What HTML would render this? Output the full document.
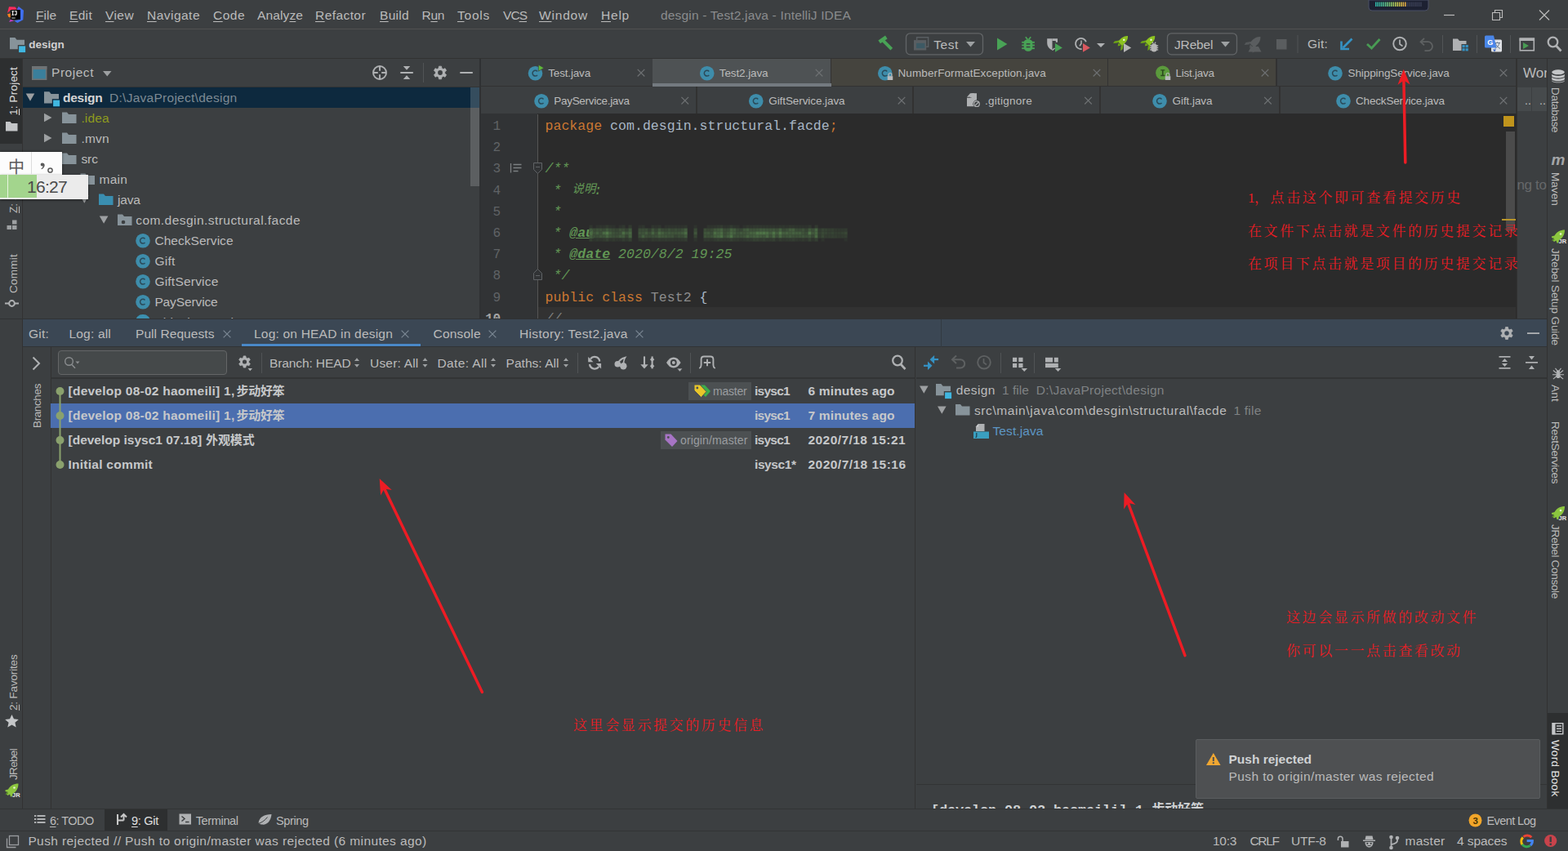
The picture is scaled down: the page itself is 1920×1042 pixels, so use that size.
<!DOCTYPE html>
<html><head><meta charset="utf-8"><title>desgin - Test2.java - IntelliJ IDEA</title>
<style>
html,body{margin:0;padding:0;background:#3c3f41;}
body{width:1920px;height:1042px;overflow:hidden;position:relative;font-family:"Liberation Sans",sans-serif;}
.t{position:absolute;white-space:pre;line-height:20px;height:20px;font-family:"Liberation Sans",sans-serif;}
.r{position:absolute;}
.v{position:absolute;white-space:pre;line-height:20px;height:20px;transform-origin:0 0;font-family:"Liberation Sans",sans-serif;}
svg.ov{position:absolute;left:0;top:0;width:1920px;height:1042px;overflow:visible;}
u{text-decoration:underline;text-underline-offset:1.5px;text-decoration-thickness:1px;}
</style></head>
<body>
<div class="r" style="left:0px;top:0px;width:1920px;height:36px;background:#3c3f41;"></div>
<div class="r" style="left:0px;top:35px;width:1920px;height:1px;background:#515151;"></div>
<div class="r" style="left:0px;top:36px;width:1920px;height:35px;background:#3c3f41;"></div>
<div class="r" style="left:0px;top:71px;width:1920px;height:1px;background:#323232;"></div>
<span class="t" style="left:44.00px;top:9px;font-size:15.5px;color:#bbbbbb;letter-spacing:0.006px;"><u>F</u>ile</span>
<span class="t" style="left:85.00px;top:9px;font-size:15.5px;color:#bbbbbb;letter-spacing:0.323px;"><u>E</u>dit</span>
<span class="t" style="left:129.00px;top:9px;font-size:15.5px;color:#bbbbbb;letter-spacing:0.421px;"><u>V</u>iew</span>
<span class="t" style="left:180.00px;top:9px;font-size:15.5px;color:#bbbbbb;letter-spacing:0.478px;"><u>N</u>avigate</span>
<span class="t" style="left:261.00px;top:9px;font-size:15.5px;color:#bbbbbb;letter-spacing:0.486px;"><u>C</u>ode</span>
<span class="t" style="left:315.00px;top:9px;font-size:15.5px;color:#bbbbbb;letter-spacing:0.122px;">Analy<u>z</u>e</span>
<span class="t" style="left:386.00px;top:9px;font-size:15.5px;color:#bbbbbb;letter-spacing:0.428px;"><u>R</u>efactor</span>
<span class="t" style="left:465.00px;top:9px;font-size:15.5px;color:#bbbbbb;letter-spacing:0.307px;"><u>B</u>uild</span>
<span class="t" style="left:516.50px;top:9px;font-size:15.5px;color:#bbbbbb;letter-spacing:-0.312px;">R<u>u</u>n</span>
<span class="t" style="left:560.00px;top:9px;font-size:15.5px;color:#bbbbbb;letter-spacing:0.763px;"><u>T</u>ools</span>
<span class="t" style="left:616.00px;top:9px;font-size:15.5px;color:#bbbbbb;letter-spacing:-0.957px;">VC<u>S</u></span>
<span class="t" style="left:660.00px;top:9px;font-size:15.5px;color:#bbbbbb;letter-spacing:0.812px;"><u>W</u>indow</span>
<span class="t" style="left:736.00px;top:9px;font-size:15.5px;color:#bbbbbb;letter-spacing:0.780px;"><u>H</u>elp</span>
<span class="t" style="left:809.00px;top:9px;font-size:15.5px;color:#8a8c8e;letter-spacing:0.167px;">desgin - Test2.java - IntelliJ IDEA</span>
<span class="t" style="left:35.20px;top:45px;font-size:13.5px;color:#d0d0d0;letter-spacing:0.016px;font-weight:bold;">design</span>
<span class="t" style="left:1143.30px;top:45px;font-size:15.5px;color:#bbbbbb;letter-spacing:0.568px;">Test</span>
<span class="t" style="left:1438.00px;top:45px;font-size:15.5px;color:#bbbbbb;letter-spacing:-0.158px;">JRebel</span>
<span class="t" style="left:1601.00px;top:44px;font-size:15.5px;color:#bbbbbb;letter-spacing:0.222px;">Git:</span>
<div class="r" style="left:0px;top:72px;width:27px;height:918px;background:#3c3f41;"></div>
<div class="r" style="left:0px;top:72px;width:27px;height:104px;background:#2d2f30;"></div>
<div class="r" style="left:27px;top:72px;width:1px;height:918px;background:#323232;"></div>
<div class="r" style="left:28px;top:72px;width:559px;height:34px;background:#3c3f41;"></div>
<div class="r" style="left:28px;top:105.5px;width:559px;height:1.5px;background:#323435;"></div>
<span class="t" style="left:63.00px;top:79px;font-size:15.5px;color:#bbbbbb;letter-spacing:0.537px;">Project</span>
<div class="r" style="left:28px;top:107px;width:559px;height:283px;background:#3c3f41;"></div>
<div class="r" style="left:28px;top:107px;width:559px;height:25px;background:#0d293e;"></div>
<div class="r" style="left:576px;top:107px;width:10.5px;height:120.5px;background:rgba(255,255,255,0.17);"></div>
<div class="r" style="left:587px;top:72px;width:2px;height:318px;background:#2f3133;"></div>
<span class="t" style="left:77.00px;top:110px;font-size:15.5px;color:#d4d4d4;letter-spacing:-0.242px;font-weight:bold;">design</span>
<span class="t" style="left:134.00px;top:110px;font-size:15.5px;color:#7d8a93;letter-spacing:0.273px;">D:\JavaProject\design</span>
<span class="t" style="left:99.40px;top:135px;font-size:15.5px;color:#8e9b1e;letter-spacing:0.158px;">.idea</span>
<span class="t" style="left:99.40px;top:160px;font-size:15.5px;color:#bbbbbb;letter-spacing:0.203px;">.mvn</span>
<span class="t" style="left:99.40px;top:185px;font-size:15.5px;color:#bbbbbb;letter-spacing:-0.054px;">src</span>
<span class="t" style="left:121.60px;top:210px;font-size:15.5px;color:#bbbbbb;letter-spacing:0.201px;">main</span>
<span class="t" style="left:144.00px;top:235px;font-size:15.5px;color:#bbbbbb;letter-spacing:-0.209px;">java</span>
<span class="t" style="left:166.20px;top:260px;font-size:15.5px;color:#bbbbbb;letter-spacing:0.454px;">com.desgin.structural.facde</span>
<span class="t" style="left:189.40px;top:285px;font-size:15.5px;color:#bbbbbb;letter-spacing:0.048px;">CheckService</span>
<span class="t" style="left:189.40px;top:310px;font-size:15.5px;color:#bbbbbb;letter-spacing:0.297px;">Gift</span>
<span class="t" style="left:189.40px;top:335px;font-size:15.5px;color:#bbbbbb;letter-spacing:0.218px;">GiftService</span>
<span class="t" style="left:189.40px;top:360px;font-size:15.5px;color:#bbbbbb;letter-spacing:-0.119px;">PayService</span>
<div class="r" style="left:28px;top:380px;width:559px;height:10px;overflow:hidden"><div class="r" style="left:138.400px;top:5px;width:17.200px;height:17.200px;border-radius:9px;background:#3b90b0"></div><span class="t" style="left:161.40px;top:5px;font-size:15.5px;color:#bbbbbb;letter-spacing:0.066px;">ShippingService</span></div>
<div class="r" style="left:589px;top:72px;width:1268px;height:34px;background:#3c3f41;"></div>
<div class="r" style="left:589px;top:106px;width:1268px;height:33px;background:#3c3f41;"></div>
<div class="r" style="left:589px;top:105px;width:1305px;height:1px;background:#323232;"></div>
<div class="r" style="left:799px;top:72px;width:1.5px;height:33px;background:#323232;"></div>
<span class="t" style="left:671.25px;top:80px;font-size:13.5px;color:#bbbbbb;letter-spacing:-0.169px;">Test.java</span>
<div class="r" style="left:799px;top:72px;width:218px;height:33px;background:#4e5254;"></div>
<div class="r" style="left:1017px;top:72px;width:1.5px;height:33px;background:#323232;"></div>
<span class="t" style="left:880.75px;top:80px;font-size:13.5px;color:#bbbbbb;letter-spacing:-0.103px;">Test2.java</span>
<div class="r" style="left:799px;top:102px;width:218.5px;height:4px;background:#747a80;"></div>
<div class="r" style="left:1018px;top:72px;width:338px;height:33px;background:#45443e;"></div>
<div class="r" style="left:1356px;top:72px;width:1.5px;height:33px;background:#323232;"></div>
<span class="t" style="left:1099.50px;top:80px;font-size:13.5px;color:#bbbbbb;letter-spacing:0.103px;">NumberFormatException.java</span>
<div class="r" style="left:1357px;top:72px;width:205px;height:33px;background:#45443e;"></div>
<div class="r" style="left:1562px;top:72px;width:1.5px;height:33px;background:#323232;"></div>
<span class="t" style="left:1439.50px;top:80px;font-size:13.5px;color:#bbbbbb;letter-spacing:-0.253px;">List.java</span>
<div class="r" style="left:1856px;top:72px;width:1.5px;height:33px;background:#323232;"></div>
<span class="t" style="left:1650.50px;top:80px;font-size:13.5px;color:#bbbbbb;letter-spacing:-0.094px;">ShippingService.java</span>
<div class="r" style="left:852px;top:106px;width:1.5px;height:33px;background:#323232;"></div>
<span class="t" style="left:678.25px;top:114px;font-size:13.5px;color:#bbbbbb;letter-spacing:-0.286px;">PayService.java</span>
<div class="r" style="left:1117px;top:106px;width:1.5px;height:33px;background:#323232;"></div>
<span class="t" style="left:941.25px;top:114px;font-size:13.5px;color:#bbbbbb;letter-spacing:-0.080px;">GiftService.java</span>
<div class="r" style="left:1346px;top:106px;width:1.5px;height:33px;background:#323232;"></div>
<span class="t" style="left:1206.00px;top:114px;font-size:13.5px;color:#bbbbbb;letter-spacing:0.246px;">.gitignore</span>
<div class="r" style="left:1566px;top:106px;width:1.5px;height:33px;background:#323232;"></div>
<span class="t" style="left:1435.50px;top:114px;font-size:13.5px;color:#bbbbbb;letter-spacing:-0.058px;">Gift.java</span>
<div class="r" style="left:1856px;top:106px;width:1.5px;height:33px;background:#323232;"></div>
<span class="t" style="left:1660.00px;top:114px;font-size:13.5px;color:#bbbbbb;letter-spacing:-0.176px;">CheckService.java</span>
<div class="r" style="left:1857px;top:72px;width:37px;height:918px;background:#3c3f41;"></div>
<div class="r" style="left:1856.5px;top:72px;width:1.5px;height:318px;background:#323232;"></div>
<span class="t" style="left:1865.00px;top:80px;font-size:17px;color:#bbbbbb;width:29px;overflow:hidden;">Wor</span>
<div class="r" style="left:1858px;top:107px;width:17px;height:29px;background:#464a4c;"></div>
<div class="r" style="left:1876px;top:107px;width:18px;height:29px;background:#464a4c;"></div>
<span class="t" style="left:1867.00px;top:113px;font-size:14px;color:#bbbbbb;">..</span>
<span class="t" style="left:1885.00px;top:113px;font-size:14px;color:#bbbbbb;width:9px;overflow:hidden;">..</span>
<span class="t" style="left:1857.50px;top:217px;font-size:17px;color:#66686a;letter-spacing:-0.362px;">ng to</span>
<div class="r" style="left:589px;top:139px;width:1268px;height:251px;background:#2b2b2b;"></div>
<div class="r" style="left:589px;top:139px;width:69px;height:251px;background:#313335;"></div>
<div class="r" style="left:659px;top:376px;width:1197px;height:14px;background:#323232;"></div>
<div class="r" style="left:658px;top:140px;width:1px;height:250px;background:#555555;"></div>
<span class="t" style="left:603.60px;top:145px;font-size:16px;color:#606366;font-family:'Liberation Mono',monospace;">1</span>
<span class="t" style="left:603.60px;top:171px;font-size:16px;color:#606366;font-family:'Liberation Mono',monospace;">2</span>
<span class="t" style="left:603.60px;top:197px;font-size:16px;color:#606366;font-family:'Liberation Mono',monospace;">3</span>
<span class="t" style="left:603.60px;top:224px;font-size:16px;color:#606366;font-family:'Liberation Mono',monospace;">4</span>
<span class="t" style="left:603.60px;top:250px;font-size:16px;color:#606366;font-family:'Liberation Mono',monospace;">5</span>
<span class="t" style="left:603.60px;top:276px;font-size:16px;color:#606366;font-family:'Liberation Mono',monospace;">6</span>
<span class="t" style="left:603.60px;top:302px;font-size:16px;color:#606366;font-family:'Liberation Mono',monospace;">7</span>
<span class="t" style="left:603.60px;top:328px;font-size:16px;color:#606366;font-family:'Liberation Mono',monospace;">8</span>
<span class="t" style="left:603.60px;top:355px;font-size:16px;color:#606366;font-family:'Liberation Mono',monospace;">9</span>
<div class="r" style="left:589px;top:372px;width:80px;height:18px;overflow:hidden"><span class="t" style="left:5.20px;top:9px;font-size:16px;color:#a4a3a3;letter-spacing:-0.201px;font-weight:bold;font-family:'Liberation Mono',monospace;">10</span></div>
<span class="t" style="left:667.50px;top:145px;font-size:16.5px;color:#cc7832;letter-spacing:0.048px;font-family:'Liberation Mono',monospace;">package</span>
<span class="t" style="left:747.10px;top:145px;font-size:16.5px;color:#a9b7c6;letter-spacing:0.048px;font-family:'Liberation Mono',monospace;">com.desgin.structural.facde</span>
<span class="t" style="left:1015.75px;top:145px;font-size:16.5px;color:#cc7832;font-family:'Liberation Mono',monospace;">;</span>
<span class="t" style="left:667.50px;top:197px;font-size:16.5px;color:#629755;letter-spacing:0.048px;font-style:italic;font-family:'Liberation Mono',monospace;">/**</span>
<span class="t" style="left:677.45px;top:224px;font-size:16.5px;color:#629755;font-style:italic;font-family:'Liberation Mono',monospace;">*</span>
<span class="t" style="left:700.50px;top:222px;font-size:14.5px;color:#629755;font-style:italic;font-family:'Liberation Mono','Noto Sans CJK SC',monospace;">说明</span>
<span class="t" style="left:727.20px;top:224px;font-size:16.5px;color:#629755;font-style:italic;font-family:'Liberation Mono',monospace;">:</span>
<span class="t" style="left:677.45px;top:250px;font-size:16.5px;color:#629755;font-style:italic;font-family:'Liberation Mono',monospace;">*</span>
<span class="t" style="left:677.45px;top:276px;font-size:16.5px;color:#629755;font-style:italic;font-family:'Liberation Mono',monospace;">*</span>
<span class="t" style="left:697.35px;top:276px;font-size:16.5px;color:#629755;letter-spacing:0.048px;font-weight:bold;font-style:italic;font-family:'Liberation Mono',monospace;text-decoration:underline;">@au</span>
<span class="t" style="left:677.45px;top:302px;font-size:16.5px;color:#629755;font-style:italic;font-family:'Liberation Mono',monospace;">*</span>
<span class="t" style="left:697.35px;top:302px;font-size:16.5px;color:#629755;letter-spacing:0.048px;font-weight:bold;font-style:italic;font-family:'Liberation Mono',monospace;text-decoration:underline;">@date</span>
<span class="t" style="left:757.05px;top:302px;font-size:16.5px;color:#629755;letter-spacing:0.048px;font-style:italic;font-family:'Liberation Mono',monospace;">2020/8/2 19:25</span>
<span class="t" style="left:677.45px;top:328px;font-size:16.5px;color:#629755;letter-spacing:0.048px;font-style:italic;font-family:'Liberation Mono',monospace;">*/</span>
<span class="t" style="left:667.50px;top:355px;font-size:16.5px;color:#cc7832;letter-spacing:0.048px;font-family:'Liberation Mono',monospace;">public class</span>
<span class="t" style="left:796.85px;top:355px;font-size:16.5px;color:#8c8c8c;letter-spacing:0.048px;font-family:'Liberation Mono',monospace;">Test2</span>
<span class="t" style="left:856.55px;top:355px;font-size:16.5px;color:#a9b7c6;font-family:'Liberation Mono',monospace;">{</span>
<div class="r" style="left:660px;top:372px;width:80px;height:18px;overflow:hidden"><span class="t" style="left:7.50px;top:9px;font-size:16.5px;color:#808080;letter-spacing:0.048px;font-style:italic;font-family:'Liberation Mono',monospace;">//</span></div>
<div class="r" style="left:1841px;top:142px;width:13px;height:13px;background:#c0941c;"></div>
<div class="r" style="left:1844px;top:161px;width:10.5px;height:122px;background:#4b4b4b;"></div>
<div class="r" style="left:1839px;top:267.5px;width:17px;height:2px;background:#b8952a;"></div>
<div class="r" style="left:0px;top:390px;width:1894px;height:1px;background:#303234;"></div>
<div class="r" style="left:28px;top:391px;width:1866px;height:33px;background:#3b4754;"></div>
<div class="r" style="left:28px;top:424px;width:1866px;height:1px;background:#313335;"></div>
<span class="t" style="left:35.00px;top:399px;font-size:15.5px;color:#bbbbbb;letter-spacing:0.222px;">Git:</span>
<span class="t" style="left:84.50px;top:399px;font-size:15.5px;color:#bbbbbb;letter-spacing:0.190px;">Log: all</span>
<span class="t" style="left:166.00px;top:399px;font-size:15.5px;color:#bbbbbb;letter-spacing:0.067px;">Pull Requests</span>
<span class="t" style="left:311.00px;top:399px;font-size:15.5px;color:#bbbbbb;letter-spacing:0.207px;">Log: on HEAD in design</span>
<div class="r" style="left:296px;top:421px;width:219px;height:3px;background:#4a88c7;"></div>
<span class="t" style="left:530.50px;top:399px;font-size:15.5px;color:#bbbbbb;letter-spacing:0.204px;">Console</span>
<span class="t" style="left:636.00px;top:399px;font-size:15.5px;color:#bbbbbb;letter-spacing:0.340px;">History: Test2.java</span>
<div class="r" style="left:1152px;top:391px;width:1px;height:34px;background:#323a42;"></div>
<div class="r" style="left:28px;top:425px;width:34px;height:565px;background:#3c3f41;"></div>
<div class="r" style="left:61.5px;top:425px;width:1px;height:565px;background:#323232;"></div>
<div class="r" style="left:62.5px;top:425px;width:1058px;height:38px;background:#3c3f41;"></div>
<div class="r" style="left:62.5px;top:462px;width:1058px;height:1.5px;background:#323435;"></div>
<div class="r" style="left:71px;top:429px;width:206.5px;height:29.5px;background:#45494a;border:1px solid #646667;border-radius:4px;box-sizing:border-box;"></div>
<div class="r" style="left:320px;top:432px;width:1px;height:25px;background:#515456;"></div>
<span class="t" style="left:330.00px;top:435px;font-size:15.5px;color:#bbbbbb;letter-spacing:-0.107px;">Branch: HEAD</span>
<span class="t" style="left:453.00px;top:435px;font-size:15.5px;color:#bbbbbb;letter-spacing:0.199px;">User: All</span>
<span class="t" style="left:535.50px;top:435px;font-size:15.5px;color:#bbbbbb;letter-spacing:0.386px;">Date: All</span>
<span class="t" style="left:619.50px;top:435px;font-size:15.5px;color:#bbbbbb;letter-spacing:0.038px;">Paths: All</span>
<div class="r" style="left:706.5px;top:432px;width:1px;height:25px;background:#515456;"></div>
<div class="r" style="left:845px;top:432px;width:1px;height:25px;background:#515456;"></div>
<div class="r" style="left:62.5px;top:463.5px;width:1058px;height:526.5px;background:#3c3f41;"></div>
<div class="r" style="left:62px;top:494px;width:1058px;height:30px;background:#4b6eaf;"></div>
<span class="t" style="left:83.50px;top:469px;font-size:15.5px;color:#c6c8ca;letter-spacing:0.250px;font-weight:bold;">[develop 08-02 haomeili] 1,</span>
<span class="t" style="left:289.50px;top:469px;font-size:15px;color:#c6c8ca;letter-spacing:-0.3px;font-weight:bold;font-family:'Liberation Sans','Noto Sans CJK SC',sans-serif;">步动好笨</span>
<span class="t" style="left:83.50px;top:499px;font-size:15.5px;color:#c6c8ca;letter-spacing:0.250px;font-weight:bold;">[develop 08-02 haomeili] 1,</span>
<span class="t" style="left:289.50px;top:499px;font-size:15px;color:#c6c8ca;letter-spacing:-0.3px;font-weight:bold;font-family:'Liberation Sans','Noto Sans CJK SC',sans-serif;">步动好笨</span>
<span class="t" style="left:83.50px;top:529px;font-size:15.5px;color:#c6c8ca;letter-spacing:-0.000px;font-weight:bold;">[develop isysc1 07.18] </span>
<span class="t" style="left:252.00px;top:529px;font-size:15px;color:#c6c8ca;letter-spacing:-0.1px;font-weight:bold;font-family:'Liberation Sans','Noto Sans CJK SC',sans-serif;">外观模式</span>
<span class="t" style="left:83.50px;top:559px;font-size:15.5px;color:#c6c8ca;letter-spacing:0.257px;font-weight:bold;">Initial commit</span>
<span class="t" style="left:924.00px;top:469px;font-size:15.5px;color:#c6c8ca;letter-spacing:-0.735px;font-weight:bold;">isysc1</span>
<span class="t" style="left:989.50px;top:469px;font-size:15.5px;color:#c6c8ca;letter-spacing:0.156px;font-weight:bold;">6 minutes ago</span>
<span class="t" style="left:924.00px;top:499px;font-size:15.5px;color:#c6c8ca;letter-spacing:-0.735px;font-weight:bold;">isysc1</span>
<span class="t" style="left:989.50px;top:499px;font-size:15.5px;color:#c6c8ca;letter-spacing:0.156px;font-weight:bold;">7 minutes ago</span>
<span class="t" style="left:924.00px;top:529px;font-size:15.5px;color:#c6c8ca;letter-spacing:-0.735px;font-weight:bold;">isysc1</span>
<span class="t" style="left:989.50px;top:529px;font-size:15.5px;color:#c6c8ca;letter-spacing:0.440px;font-weight:bold;">2020/7/18 15:21</span>
<span class="t" style="left:924.00px;top:559px;font-size:15.5px;color:#c6c8ca;letter-spacing:-0.420px;font-weight:bold;">isysc1*</span>
<span class="t" style="left:989.50px;top:559px;font-size:15.5px;color:#c6c8ca;letter-spacing:0.473px;font-weight:bold;">2020/7/18 15:16</span>
<div class="r" style="left:842.5px;top:467.5px;width:77.5px;height:22px;background:#4c5052;"></div>
<span class="t" style="left:873.00px;top:469px;font-size:14px;color:#9a9da0;letter-spacing:-0.214px;">master</span>
<div class="r" style="left:809px;top:527.5px;width:111px;height:22px;background:#4c5052;"></div>
<span class="t" style="left:833.00px;top:529px;font-size:14px;color:#9a9da0;letter-spacing:0.122px;">origin/master</span>
<div class="r" style="left:1120px;top:425px;width:1px;height:565px;background:#323232;"></div>
<div class="r" style="left:1121px;top:425px;width:773px;height:565px;background:#3c3f41;"></div>
<div class="r" style="left:1121.5px;top:462px;width:772.5px;height:1.5px;background:#323435;"></div>
<div class="r" style="left:1225px;top:432px;width:1px;height:25px;background:#515456;"></div>
<div class="r" style="left:1266px;top:432px;width:1px;height:25px;background:#515456;"></div>
<span class="t" style="left:1170.75px;top:468px;font-size:15.5px;color:#bbbbbb;letter-spacing:0.387px;">design</span>
<span class="t" style="left:1227.00px;top:468px;font-size:15.5px;color:#7f8284;letter-spacing:0.043px;">1 file</span>
<span class="t" style="left:1268.75px;top:468px;font-size:15.5px;color:#7f8284;letter-spacing:0.297px;">D:\JavaProject\design</span>
<span class="t" style="left:1193.00px;top:493px;font-size:15.5px;color:#bbbbbb;letter-spacing:0.594px;">src\main\java\com\desgin\structural\facde</span>
<span class="t" style="left:1510.50px;top:493px;font-size:15.5px;color:#7f8284;letter-spacing:0.210px;">1 file</span>
<span class="t" style="left:1215.50px;top:518px;font-size:15.5px;color:#5d96c4;letter-spacing:0.092px;">Test.java</span>
<div class="r" style="left:1121.5px;top:960px;width:772.5px;height:1px;background:#323435;"></div>
<div class="r" style="left:1122px;top:975px;width:400px;height:14.500px;overflow:hidden"><span class="t" style="left:18.00px;top:8px;font-size:17px;color:#d0d2d4;letter-spacing:-0.202px;font-weight:bold;font-family:'Liberation Mono',monospace;">[develop 08-02 haomeili] 1,</span></div>
<div class="r" style="left:1410px;top:975px;width:80px;height:14.500px;overflow:hidden"><span class="t" style="left:0.50px;top:7px;font-size:16px;color:#d0d2d4;letter-spacing:-0.2px;font-weight:bold;font-family:'Liberation Mono','Noto Sans CJK SC',monospace;">步动好笨</span></div>
<div class="r" style="left:0px;top:989.5px;width:1920px;height:1px;background:#323435;"></div>
<div class="r" style="left:0px;top:990.5px;width:1920px;height:26px;background:#3c3f41;"></div>
<div class="r" style="left:0px;top:1016.5px;width:1920px;height:1px;background:#323435;"></div>
<div class="r" style="left:0px;top:1017.5px;width:1920px;height:24.5px;background:#3c3f41;"></div>
<div class="r" style="left:127.5px;top:990.5px;width:77.5px;height:26px;background:#2d2f30;"></div>
<span class="t" style="left:61.00px;top:995px;font-size:14.5px;color:#bbbbbb;letter-spacing:-0.555px;"><u>6</u>: TODO</span>
<span class="t" style="left:161.00px;top:995px;font-size:14.5px;color:#e0e0e0;letter-spacing:-0.275px;"><u>9</u>: Git</span>
<span class="t" style="left:239.70px;top:995px;font-size:14.5px;color:#bbbbbb;letter-spacing:-0.349px;">Terminal</span>
<span class="t" style="left:338.00px;top:995px;font-size:14.5px;color:#bbbbbb;letter-spacing:-0.386px;">Spring</span>
<span class="t" style="left:1820.50px;top:995px;font-size:14.5px;color:#bbbbbb;letter-spacing:-0.589px;">Event Log</span>
<span class="t" style="left:34.40px;top:1020px;font-size:15.5px;color:#bbbbbb;letter-spacing:0.394px;">Push rejected // Push to origin/master was rejected (6 minutes ago)</span>
<span class="t" style="left:1485.00px;top:1020px;font-size:15.5px;color:#bbbbbb;letter-spacing:-0.292px;">10:3</span>
<span class="t" style="left:1530.50px;top:1020px;font-size:15.5px;color:#bbbbbb;letter-spacing:-1.369px;">CRLF</span>
<span class="t" style="left:1581.00px;top:1020px;font-size:15.5px;color:#bbbbbb;letter-spacing:-0.232px;">UTF-8</span>
<span class="t" style="left:1720.50px;top:1020px;font-size:15.5px;color:#bbbbbb;letter-spacing:0.272px;">master</span>
<span class="t" style="left:1784.00px;top:1020px;font-size:15.5px;color:#bbbbbb;letter-spacing:-0.067px;">4 spaces</span>
<div class="r" style="left:1464px;top:905px;width:422px;height:73px;background:#4e5052;border:1px solid #5a5d5f;box-sizing:border-box;border-radius:2px;"></div>
<span class="t" style="left:1504.50px;top:920px;font-size:15.5px;color:#d0d2d4;letter-spacing:-0.012px;font-weight:bold;">Push rejected</span>
<span class="t" style="left:1504.50px;top:941px;font-size:15.5px;color:#bbbbbb;letter-spacing:0.404px;">Push to origin/master was rejected</span>
<span class="v" style="left:7px;top:140.5px;font-size:13.5px;color:#e0e0e0;transform:rotate(-90deg);letter-spacing:0.197px;"><u>1</u>: Project</span>
<span class="v" style="left:7px;top:260.5px;font-size:13.5px;color:#bbbbbb;transform:rotate(-90deg);letter-spacing:0.123px;"><u>Z</u>: Structure</span>
<span class="v" style="left:7px;top:358.5px;font-size:13.5px;color:#bbbbbb;transform:rotate(-90deg);letter-spacing:0.250px;">Commit</span>
<span class="v" style="left:7px;top:869.5px;font-size:13.5px;color:#bbbbbb;transform:rotate(-90deg);letter-spacing:-0.169px;"><u>2</u>: Favorites</span>
<span class="v" style="left:7px;top:955px;font-size:13.5px;color:#bbbbbb;transform:rotate(-90deg);letter-spacing:-0.670px;">JRebel</span>
<div class="r" style="left:1894px;top:72px;width:26px;height:918px;background:#3c3f41;"></div>
<div class="r" style="left:1894px;top:72px;width:1px;height:918px;background:#323232;"></div>
<div class="r" style="left:1895px;top:872.5px;width:25px;height:117px;background:#2d2f30;"></div>
<span class="v" style="left:1914px;top:107px;font-size:13.5px;color:#bbbbbb;transform:rotate(90deg);letter-spacing:-0.311px;">Database</span>
<span class="t" style="left:1899.500px;top:186px;font-size:19px;color:#a4a6a8;font-weight:bold;font-style:italic;">m</span>
<span class="v" style="left:1914px;top:211.3px;font-size:13.5px;color:#bbbbbb;transform:rotate(90deg);letter-spacing:0.056px;">Maven</span>
<span class="v" style="left:1914px;top:303.7px;font-size:13.5px;color:#bbbbbb;transform:rotate(90deg);letter-spacing:-0.102px;">JRebel Setup Guide</span>
<span class="v" style="left:1914px;top:470.7px;font-size:13.5px;color:#bbbbbb;transform:rotate(90deg);letter-spacing:0.246px;">Ant</span>
<span class="v" style="left:1914px;top:515.8px;font-size:13.5px;color:#bbbbbb;transform:rotate(90deg);letter-spacing:-0.269px;">RestServices</span>
<span class="v" style="left:1914px;top:641.5px;font-size:13.5px;color:#bbbbbb;transform:rotate(90deg);letter-spacing:-0.307px;">JRebel Console</span>
<span class="v" style="left:1914px;top:905.5px;font-size:13.5px;color:#e8e8e8;transform:rotate(90deg);letter-spacing:0.330px;">Word Book</span>
<span class="v" style="left:36px;top:523.5px;font-size:13.5px;color:#bbbbbb;transform:rotate(-90deg);letter-spacing:-0.379px;">Branches</span>
<svg class="ov" viewBox="0 0 1920 1042">
<g><path d="M11 8.300l7.700.3 2 3.200-7.500.3-4.200 3.800z" fill="#fd2c5c"/><path d="M9 17.300l3.800-.7v4.800l-2.400-.7z" fill="#fc801d"/><path d="M12.800 23.800l-1.700 3.100 6.200-1.300z" fill="#c13cc0"/><path d="M22.800 8l6.200 4.800-.7 11.400-6.900 3.800-4.100-2.400 7.600-1.800v-11.700l-4.200-.3z" fill="#3f6ff0"/><path d="M20.700 11.800l2.100-3.800 2.100 4.100z" fill="#5a5be6"/><rect x="13.100" y="12.100" width="11.800" height="11.700" fill="#000"/><path d="M14.300 13.200h2.700v1h-.8v3.500h.8v1h-2.700v-1h.8v-3.500h-.8z M17.600 13.200h3.100v3.700c0 1.300-.7 1.900-1.800 1.900-.8 0-1.300-.3-1.700-.8l.8-.8c.25.3.45.45.8.45.45 0 .75-.3.75-.85v-2.600h-1.950z" fill="#fff"/><rect x="14.200" y="21.400" width="4.500" height="1.300" fill="#9a9a9a"/></g>
<path d="M1768 18.5h13" stroke="#bbbbbb" stroke-width="1.2" fill="none"/>
<path d="M1827.5 15.5h9v9h-9z M1830.5 15.5v-3h9v9h-3" stroke="#bbbbbb" stroke-width="1.1" fill="none"/>
<path d="M1885 12.5l12 12M1897 12.5l-12 12" stroke="#bbbbbb" stroke-width="1.2" fill="none"/>
<path d="M1676 0h73v9a4 4 0 0 1-4 4h-65a4 4 0 0 1-4-4z" fill="#1d2132" stroke="#4b5066" stroke-width="1"/>
<rect x="1684.0" y="2.5" width="1.5" height="5.5" fill="#2fb5a8"/>
<rect x="1686.4" y="2.5" width="1.5" height="5.5" fill="#35b8a5"/>
<rect x="1688.8" y="2.5" width="1.5" height="5.5" fill="#3dbba0"/>
<rect x="1691.2" y="2.5" width="1.5" height="5.5" fill="#46be9a"/>
<rect x="1693.6" y="2.5" width="1.5" height="5.5" fill="#52c192"/>
<rect x="1696.0" y="2.5" width="1.5" height="5.5" fill="#5fc48a"/>
<rect x="1698.4" y="2.5" width="1.5" height="5.5" fill="#6ec780"/>
<rect x="1700.8" y="2.5" width="1.5" height="5.5" fill="#7fc975"/>
<rect x="1703.2" y="2.5" width="1.5" height="5.5" fill="#92cb6a"/>
<rect x="1705.6" y="2.5" width="1.5" height="5.5" fill="#a6cc60"/>
<rect x="1708.0" y="2.5" width="1.5" height="5.5" fill="#b9cc58"/>
<rect x="1710.4" y="2.5" width="1.5" height="5.5" fill="#c9ca52"/>
<rect x="1712.8" y="2.5" width="1.5" height="5.5" fill="#d6c64d"/>
<rect x="1715.2" y="2.5" width="1.5" height="5.5" fill="#dfc04a"/>
<rect x="1717.6" y="2.5" width="1.5" height="5.5" fill="#e5b848"/>
<rect x="1720.0" y="2.5" width="1.5" height="5.5" fill="#e8ae46"/>
<rect x="1722.4" y="2.5" width="1.5" height="5.5" fill="#3a3f55"/>
<rect x="1724.8" y="2.5" width="1.5" height="5.5" fill="#3a3f55"/>
<rect x="1727.2" y="2.5" width="1.5" height="5.5" fill="#3a3f55"/>
<rect x="1729.6" y="2.5" width="1.5" height="5.5" fill="#3a3f55"/>
<rect x="1732.0" y="2.5" width="1.5" height="5.5" fill="#3a3f55"/>
<rect x="1734.4" y="2.5" width="1.5" height="5.5" fill="#3a3f55"/>
<rect x="1736.8" y="2.5" width="1.5" height="5.5" fill="#3a3f55"/>
<rect x="1739.2" y="2.5" width="1.5" height="5.5" fill="#3a3f55"/>
<path d="M12 46h6.400l2.200 2.800h9.400v11.400h-18z" fill="#87939a"/>
<rect x="21.8" y="55" width="10" height="10" fill="#3c3f41"/>
<rect x="23.1" y="56.4" width="8" height="7.700" fill="#40b6e0"/>
<path d="M1076.700 51.300l8.600-5.800" stroke="#49a356" stroke-width="4.600" fill="none"/><path d="M1081.800 50.200l10 10" stroke="#49a356" stroke-width="3.800" fill="none"/>
<rect x="1109.500" y="40.800" width="94" height="26" rx="5" fill="none" stroke="#626567" stroke-width="1.300"/>
<g transform="translate(1119,45)"><path d="M3.600 4v-3.300h14v11.600h-2.500" stroke="#595e62" fill="none" stroke-width="1.500"/><rect x="0" y="4.100" width="15.200" height="12.400" fill="#595e62"/><rect x="3" y="7.800" width="10.400" height="6.300" fill="#3d5964"/></g>
<path d="M1183 51h11l-5.500 6.500z" fill="#9da0a2"/>
<path d="M1221 46.600l12.400 7.400-12.400 7.400z" fill="#49a356"/>
<g fill="#49a356" stroke="none"><path d="M1259 48.300c3 0 5.300 1.200 5.300 3.500v6c0 3-2.300 5-5.300 5s-5.300-2-5.300-5v-6c0-2.300 2.300-3.500 5.300-3.500z"/><rect x="1251.200" y="50.900" width="15.700" height="1.800"/><rect x="1251.200" y="54.500" width="15.700" height="1.800"/><rect x="1251.200" y="58.300" width="15.700" height="1.800"/></g><path d="M1255.800 45.300l2.600 3.200M1262.200 45.300l-2.600 3.200" stroke="#49a356" stroke-width="1.700" fill="none"/><rect x="1256.700" y="53.100" width="4.700" height="1.500" fill="#3c3f41"/><rect x="1256.700" y="56.800" width="4.700" height="1.500" fill="#3c3f41"/>
<path d="M1282.200 47.300h6.300v14.200c-3.800-1.800-6.300-4.800-6.300-9z" fill="#afb1b3"/><path d="M1288.500 47.300h6.500v4.500h-2.200v-1.700h-4.300z" fill="#afb1b3"/><path d="M1288.500 61.500l3-2.500" stroke="#afb1b3" stroke-width="1.500"/><path d="M1292 53.100l8.900 5.300-8.900 5.300z" fill="#49a356"/>
<path d="M1329.900 51.300a6.600 6.600 0 1 0-5.300 8.700" stroke="#afb1b3" stroke-width="1.800" fill="none"/><path d="M1324 49.500v4l-2 2.800" stroke="#afb1b3" stroke-width="1.500" fill="none"/><path d="M1326 53.100l8.800 5.300-8.800 5.300z" fill="#db5860"/>
<path d="M1343 53h10l-5 5z" fill="#afb1b3"/>
<g transform="translate(1374.3,50.8) rotate(45)"><path d="M-3.200 1l-3.800 5.500.6 3 3.400-4z M3.200 1l3.800 5.500-.6 3-3.400-4z" fill="#6ea516"/><path d="M0 -9.500c3.600 3 4.300 8 3.300 13.500h-6.600c-1-5.500-.3-10.500 3.300-13.500z" fill="#8cc220"/><path d="M-2.200 4.500l2.200 3.500 2.200-3.500z" fill="#6ea516"/><circle cx="0" cy="-2.800" r="1.200" fill="#f0f8e0"/></g>
<path d="M1376 53.100l9.200 5.500-9.200 5.500z" fill="#b6b6b6"/>
<g transform="translate(1407.5,50.8) rotate(45)"><path d="M-3.200 1l-3.800 5.500.6 3 3.400-4z M3.200 1l3.800 5.500-.6 3-3.400-4z" fill="#6ea516"/><path d="M0 -9.500c3.600 3 4.300 8 3.300 13.500h-6.600c-1-5.500-.3-10.500 3.300-13.500z" fill="#8cc220"/><path d="M-2.200 4.500l2.200 3.500 2.200-3.500z" fill="#6ea516"/><circle cx="0" cy="-2.800" r="1.200" fill="#f0f8e0"/></g>
<g fill="#b6b6b6"><path d="M1413.100 53.500c2 0 3.600 1 3.600 2.700v4c0 2-1.600 3.300-3.600 3.300s-3.600-1.300-3.600-3.300v-4c0-1.700 1.600-2.700 3.600-2.700z"/><rect x="1408" y="55.300" width="10.200" height="1.300"/><rect x="1408" y="57.800" width="10.200" height="1.300"/><rect x="1408" y="60.300" width="10.200" height="1.300"/></g><path d="M1411 51.700l1.500 2M1415.200 51.700l-1.500 2" stroke="#b6b6b6" stroke-width="1.200"/>
<rect x="1429.500" y="40.800" width="85" height="26" rx="5" fill="none" stroke="#626567" stroke-width="1.300"/>
<path d="M1495 51h11l-5.500 6.500z" fill="#9da0a2"/>
<g transform="translate(1536,52.5) rotate(45) scale(1.1)"><path d="M-3.200 1l-3.800 5.500.6 3 3.400-4z M3.200 1l3.800 5.500-.6 3-3.400-4z" fill="#55585a"/><path d="M0 -9.500c3.600 3 4.300 8 3.300 13.500h-6.600c-1-5.500-.3-10.500 3.300-13.500z" fill="#5a5d5f"/><path d="M-2.200 4.500l2.200 3.500 2.200-3.500z" fill="#55585a"/><circle cx="0" cy="-2.800" r="1.200" fill="#5a5d5f"/></g>
<path d="M1532 57h9l3.500 6.500h-16z" fill="#5a5d5f"/>
<rect x="1563" y="48" width="12.500" height="12.500" fill="#5a5d5f"/>
<rect x="1588.500" y="43" width="1" height="22" fill="#515456"/>
<path d="M1655.500 47.500l-11 11" stroke="#3592c4" stroke-width="2.600" fill="none"/><path d="M1642.500 50.500v9.500h9.500" stroke="#3592c4" stroke-width="2.600" fill="none"/>
<path d="M1674 54l5.500 5 10-11" stroke="#499c54" stroke-width="2.800" fill="none"/>
<circle cx="1714" cy="53.500" r="7.800" stroke="#afb1b3" stroke-width="1.900" fill="none"/><path d="M1714 48.500v5.500l3.500 2.500" stroke="#afb1b3" stroke-width="1.700" fill="none"/>
<path d="M1744 47l-4.500 4.200 4.500 4.200" stroke="#5e6162" stroke-width="1.800" fill="none"/><path d="M1740 51.200h8.500a5.500 5.500 0 0 1 0 11h-4" stroke="#5e6162" stroke-width="1.800" fill="none"/>
<rect x="1766" y="43" width="1" height="22" fill="#515456"/>
<g transform="translate(1779,47.500)"><path d="M0 0h6l2 2.500h8.500v4h-6v8h-10.500z" fill="#afb1b3"/><rect x="11.500" y="7.500" width="3.200" height="3.200" fill="#3592c4"/><rect x="15.600" y="7.500" width="3.200" height="3.200" fill="#3592c4"/><rect x="11.500" y="11.700" width="3.200" height="3.200" fill="#3592c4"/><rect x="15.600" y="11.700" width="3.200" height="3.200" fill="#3592c4"/></g>
<rect x="1808" y="43" width="1" height="22" fill="#515456"/>
<g transform="translate(1818,43.500)"><rect x="8" y="5" width="13" height="15" rx="1.500" fill="#e0e2e6"/><path d="M12 9h7M15.500 8v1.500M13 9c1 3.500 3 5.500 6 7M18 9c-1 3.500-2.500 5.500-5.500 7" stroke="#6a7a8c" stroke-width="1" fill="none"/><path d="M1.500 0h9.500l3.500 15h-13a1.500 1.500 0 0 1-1.500-1.500v-12a1.500 1.500 0 0 1 1.500-1.500z" fill="#4a86e8"/><path d="M10 17l4 0-2 3z" fill="#3a66c0"/><text x="3.200" y="11.500" font-family="Liberation Sans" font-size="9" font-weight="bold" fill="#fff">G</text></g>
<rect x="1849" y="43" width="1" height="22" fill="#515456"/>
<g transform="translate(1860.500,46.500)"><rect x=".8" y=".8" width="17" height="14.500" fill="none" stroke="#afb1b3" stroke-width="1.600"/><rect x="0" y="0" width="18.600" height="3.500" fill="#afb1b3"/><path d="M4.500 5.500l7 4-7 4z" fill="#499c54"/></g>
<circle cx="1901.500" cy="51.500" r="5.800" stroke="#afb1b3" stroke-width="2.300" fill="none"/><path d="M1905.500 56l6 6.500" stroke="#afb1b3" stroke-width="2.800" fill="none"/>
<g transform="translate(39,81)"><rect x=".8" y=".8" width="16.800" height="15.400" fill="#3a7f9c" stroke="#6e7375" stroke-width="1.600"/><rect x="0" y="0" width="18.400" height="4" fill="#6e7375"/></g>
<path d="M126 87h10.500l-5.250 6.500z" fill="#9da0a2"/>
<g stroke="#afb1b3" fill="none"><circle cx="465" cy="89" r="8" stroke-width="1.900"/><path d="M465 81v5.800M465 91.200v5.800M457 89h5.800M467.200 89h5.800" stroke-width="1.900"/></g>
<g fill="#afb1b3"><rect x="490.300" y="88" width="15.500" height="2"/><path d="M493.800 81h8.400l-4.200 4.700z M493.800 97h8.400l-4.200-4.700z"/></g>
<rect x="518" y="77" width="1" height="24" fill="#515456"/>
<path d="M540.88 83.55L540.53 81.15L537.47 81.15L537.12 83.55L535.22 84.65L532.96 83.75L531.44 86.40L533.35 87.90L533.35 90.10L531.44 91.60L532.96 94.25L535.22 93.35L537.12 94.45L537.47 96.85L540.53 96.85L540.88 94.45L542.78 93.35L545.04 94.25L546.56 91.60L544.65 90.10L544.65 87.90L546.56 86.40L545.04 83.75L542.78 84.65Z" fill="#afb1b3" stroke="#afb1b3" stroke-width=".8" stroke-linejoin="round"/><circle cx="539" cy="89" r="2.88" fill="#3c3f41"/>
<rect x="563.300" y="88" width="15.500" height="2" fill="#afb1b3"/>
<path d="M31.7 114.5h10.600l-5.300 9.200z" fill="#9da0a2"/>
<path d="M54 112.2h6.400l2.200 2.800h9.400v11.400h-18z" fill="#87939a"/>
<rect x="63.8" y="121.2" width="10" height="10" fill="#0d293e"/>
<rect x="65.1" y="122.6" width="8" height="7.700" fill="#40b6e0"/>
<path d="M54 138.7l9.500 5.300-9.500 5.300z" fill="#9da0a2"/>
<path d="M76 137.5h6l2 2.500h9.500v11h-17.500z" fill="#87939a"/>
<path d="M54 163.7l9.500 5.300-9.500 5.300z" fill="#9da0a2"/>
<path d="M76 162.5h6l2 2.500h9.500v11h-17.500z" fill="#87939a"/>
<path d="M53 189.5h10.600l-5.300 9.200z" fill="#9da0a2"/>
<path d="M76 187.5h6l2 2.500h9.500v11h-17.500z" fill="#87939a"/>
<path d="M75 214.5h10.600l-5.300 9.200z" fill="#9da0a2"/>
<path d="M98.500 212.500h6l2 2.500h9.500v11h-17.500z" fill="#87939a"/>
<path d="M98 239.500h10.600l-5.300 9.200z" fill="#9da0a2"/>
<path d="M121 237.500h6l2 2.500h9.500v11h-17.500z" fill="#3a8eb0"/>
<path d="M121.8 264.500h10.600l-5.300 9.200z" fill="#9da0a2"/>
<path d="M144 262.500h6l2 2.500h9.500v11h-17.500z" fill="#87939a"/>
<circle cx="151" cy="272" r="2.300" fill="#3c3f41"/>
<circle cx="175" cy="294.700" r="8.800" fill="#3e8dab"/>
<path d="M177.500 292.400a3.400 3.400 0 1 0 0 4.600" stroke="#2a4a59" stroke-width="1.500" fill="none"/>
<circle cx="175" cy="319.700" r="8.800" fill="#3e8dab"/>
<path d="M177.500 317.400a3.400 3.400 0 1 0 0 4.600" stroke="#2a4a59" stroke-width="1.500" fill="none"/>
<circle cx="175" cy="344.700" r="8.800" fill="#3e8dab"/>
<path d="M177.500 342.400a3.400 3.400 0 1 0 0 4.600" stroke="#2a4a59" stroke-width="1.500" fill="none"/>
<circle cx="175" cy="369.700" r="8.800" fill="#3e8dab"/>
<path d="M177.500 367.400a3.400 3.400 0 1 0 0 4.600" stroke="#2a4a59" stroke-width="1.500" fill="none"/>
<circle cx="655.500" cy="89.700" r="8.800" fill="#3e8dab"/>
<path d="M658 87.400a3.400 3.400 0 1 0 0 4.600" stroke="#2a4a59" stroke-width="1.500" fill="none"/>
<path d="M659.300 79.200l6.800 4-6.800 4z" fill="#5fb83a" stroke="#3c3f41" stroke-width=".7"/>
<path d="M780.700 84.900l8.600 8.600M789.300 84.900l-8.600 8.600" stroke="#6e7173" stroke-width="1.200" fill="none"/>
<circle cx="865.750" cy="89.700" r="8.800" fill="#3e8dab"/>
<path d="M868.250 87.400a3.400 3.400 0 1 0 0 4.600" stroke="#2a4a59" stroke-width="1.500" fill="none"/>
<path d="M998.700 84.900l8.600 8.600M1007.300 84.900l-8.600 8.600" stroke="#6e7173" stroke-width="1.200" fill="none"/>
<circle cx="1083.750" cy="89.700" r="8.800" fill="#3e8dab"/>
<path d="M1086.250 87.400a3.400 3.400 0 1 0 0 4.600" stroke="#2a4a59" stroke-width="1.500" fill="none"/>
<rect x="1086.750" y="93.200" width="6.500" height="4.800" fill="#b8babc"/><path d="M1088.1 93.200v-1.800a1.900 1.900 0 0 1 3.800 0v1.800" stroke="#b8babc" stroke-width="1.200" fill="none"/>
<path d="M1338.700 84.900l8.600 8.600M1347.300 84.900l-8.600 8.600" stroke="#6e7173" stroke-width="1.200" fill="none"/>
<circle cx="1423.750" cy="89.200" r="8.600" fill="#5b9a3c"/>
<path d="M1421.250 85.200h5v1.400h-1.700v5.200h1.700v1.400h-5v-1.400h1.700v-5.200h-1.700z" fill="#2c4a1f"/>
<rect x="1426.750" y="93.200" width="6.500" height="4.800" fill="#b8babc"/><path d="M1428.1 93.200v-1.800a1.900 1.900 0 0 1 3.800 0v1.800" stroke="#b8babc" stroke-width="1.200" fill="none"/>
<path d="M1544.700 84.900l8.600 8.600M1553.300 84.900l-8.600 8.600" stroke="#6e7173" stroke-width="1.200" fill="none"/>
<circle cx="1635" cy="89.700" r="8.800" fill="#3e8dab"/>
<path d="M1637.500 87.400a3.400 3.400 0 1 0 0 4.600" stroke="#2a4a59" stroke-width="1.500" fill="none"/>
<path d="M1836.700 84.900l8.600 8.600M1845.300 84.900l-8.600 8.600" stroke="#6e7173" stroke-width="1.200" fill="none"/>
<circle cx="663" cy="123.700" r="8.800" fill="#3e8dab"/>
<path d="M665.500 121.400a3.400 3.400 0 1 0 0 4.600" stroke="#2a4a59" stroke-width="1.500" fill="none"/>
<path d="M834.450 118.900l8.600 8.600M843.050 118.900l-8.600 8.600" stroke="#6e7173" stroke-width="1.200" fill="none"/>
<circle cx="925.750" cy="123.700" r="8.800" fill="#3e8dab"/>
<path d="M928.250 121.400a3.400 3.400 0 1 0 0 4.600" stroke="#2a4a59" stroke-width="1.500" fill="none"/>
<path d="M1099.700 118.900l8.600 8.600M1108.300 118.900l-8.600 8.600" stroke="#6e7173" stroke-width="1.200" fill="none"/>
<g transform="translate(1184,114.200)"><path d="M4 0h5v5h-5z M4 0l-4 4.500h4z M0 5.500h9v10.500h-9z M9 5.500h3v5h-3z" fill="#afb1b3"/><path d="M5.500 0h6.500v8h-6.500z" fill="#afb1b3"/><circle cx="12" cy="13" r="4.600" fill="#3c3f41"/><circle cx="12" cy="13" r="3.300" fill="none" stroke="#afb1b3" stroke-width="1.200"/><path d="M9.800 15.200l4.400-4.400" stroke="#afb1b3" stroke-width="1.200"/></g>
<path d="M1328.2 118.900l8.600 8.600M1336.800 118.900l-8.600 8.600" stroke="#6e7173" stroke-width="1.200" fill="none"/>
<circle cx="1420" cy="123.700" r="8.800" fill="#3e8dab"/>
<path d="M1422.500 121.400a3.400 3.400 0 1 0 0 4.600" stroke="#2a4a59" stroke-width="1.500" fill="none"/>
<path d="M1548.2 118.900l8.600 8.600M1556.800 118.900l-8.600 8.600" stroke="#6e7173" stroke-width="1.200" fill="none"/>
<circle cx="1645" cy="123.700" r="8.800" fill="#3e8dab"/>
<path d="M1647.500 121.400a3.400 3.400 0 1 0 0 4.600" stroke="#2a4a59" stroke-width="1.500" fill="none"/>
<path d="M1836.700 118.900l8.600 8.600M1845.300 118.900l-8.600 8.600" stroke="#6e7173" stroke-width="1.200" fill="none"/>
<rect x="721.5" y="275.5" width="4.2" height="4.200" fill="#30362f"/>
<rect x="721.5" y="279.5" width="4.2" height="4.200" fill="#41583d"/>
<rect x="721.5" y="283.5" width="4.2" height="4.200" fill="#4a6b44"/>
<rect x="721.5" y="287.5" width="4.2" height="4.200" fill="#445d3f"/>
<rect x="721.5" y="291.5" width="4.2" height="4.200" fill="#343e32"/>
<rect x="725.5" y="279.5" width="4.2" height="4.200" fill="#3b4b37"/>
<rect x="725.5" y="283.5" width="4.2" height="4.200" fill="#3e523a"/>
<rect x="725.5" y="287.5" width="4.2" height="4.200" fill="#3d4f39"/>
<rect x="725.5" y="291.5" width="4.2" height="4.200" fill="#2f342e"/>
<rect x="729.5" y="275.5" width="4.2" height="4.200" fill="#2f332e"/>
<rect x="729.5" y="279.5" width="4.2" height="4.200" fill="#3d5039"/>
<rect x="729.5" y="283.5" width="4.2" height="4.200" fill="#445e3f"/>
<rect x="729.5" y="287.5" width="4.2" height="4.200" fill="#3b4c38"/>
<rect x="729.5" y="291.5" width="4.2" height="4.200" fill="#313830"/>
<rect x="733.5" y="275.5" width="4.2" height="4.200" fill="#30352f"/>
<rect x="733.5" y="279.5" width="4.2" height="4.200" fill="#3d4f39"/>
<rect x="733.5" y="283.5" width="4.2" height="4.200" fill="#3d5039"/>
<rect x="733.5" y="287.5" width="4.2" height="4.200" fill="#3f553b"/>
<rect x="733.5" y="291.5" width="4.2" height="4.200" fill="#30362f"/>
<rect x="737.5" y="275.5" width="4.2" height="4.200" fill="#2f342e"/>
<rect x="737.5" y="279.5" width="4.2" height="4.200" fill="#3a4a37"/>
<rect x="737.5" y="283.5" width="4.2" height="4.200" fill="#496943"/>
<rect x="737.5" y="287.5" width="4.2" height="4.200" fill="#3e533a"/>
<rect x="737.5" y="291.5" width="4.2" height="4.200" fill="#323930"/>
<rect x="741.5" y="275.5" width="4.2" height="4.200" fill="#323a30"/>
<rect x="741.5" y="279.5" width="4.2" height="4.200" fill="#40573c"/>
<rect x="741.5" y="283.5" width="4.2" height="4.200" fill="#517849"/>
<rect x="741.5" y="287.5" width="4.2" height="4.200" fill="#466341"/>
<rect x="741.5" y="291.5" width="4.2" height="4.200" fill="#353f33"/>
<rect x="745.5" y="275.5" width="4.2" height="4.200" fill="#2f342e"/>
<rect x="745.5" y="279.5" width="4.2" height="4.200" fill="#3b4d38"/>
<rect x="745.5" y="283.5" width="4.2" height="4.200" fill="#435d3e"/>
<rect x="745.5" y="287.5" width="4.2" height="4.200" fill="#3f543b"/>
<rect x="745.5" y="291.5" width="4.2" height="4.200" fill="#30362f"/>
<rect x="749.5" y="275.5" width="4.2" height="4.200" fill="#2e322e"/>
<rect x="749.5" y="279.5" width="4.2" height="4.200" fill="#394836"/>
<rect x="749.5" y="283.5" width="4.2" height="4.200" fill="#3d5039"/>
<rect x="749.5" y="287.5" width="4.2" height="4.200" fill="#3c4f39"/>
<rect x="749.5" y="291.5" width="4.2" height="4.200" fill="#323930"/>
<rect x="753.5" y="279.5" width="4.2" height="4.200" fill="#374434"/>
<rect x="753.5" y="283.5" width="4.2" height="4.200" fill="#3b4c38"/>
<rect x="753.5" y="287.5" width="4.2" height="4.200" fill="#3c4d38"/>
<rect x="753.5" y="291.5" width="4.2" height="4.200" fill="#30352f"/>
<rect x="757.5" y="275.5" width="4.2" height="4.200" fill="#2f332e"/>
<rect x="757.5" y="279.5" width="4.2" height="4.200" fill="#3d4f39"/>
<rect x="757.5" y="283.5" width="4.2" height="4.200" fill="#3d4f39"/>
<rect x="757.5" y="287.5" width="4.2" height="4.200" fill="#41593d"/>
<rect x="757.5" y="291.5" width="4.2" height="4.200" fill="#30352f"/>
<rect x="761.5" y="275.5" width="4.2" height="4.200" fill="#313830"/>
<rect x="761.5" y="279.5" width="4.2" height="4.200" fill="#3c4d38"/>
<rect x="761.5" y="283.5" width="4.2" height="4.200" fill="#4b6c44"/>
<rect x="761.5" y="287.5" width="4.2" height="4.200" fill="#42593d"/>
<rect x="761.5" y="291.5" width="4.2" height="4.200" fill="#333c32"/>
<rect x="765.5" y="279.5" width="4.2" height="4.200" fill="#364234"/>
<rect x="765.5" y="283.5" width="4.2" height="4.200" fill="#40563c"/>
<rect x="765.5" y="287.5" width="4.2" height="4.200" fill="#384535"/>
<rect x="765.5" y="291.5" width="4.2" height="4.200" fill="#30372f"/>
<rect x="769.5" y="275.5" width="4.2" height="4.200" fill="#323a30"/>
<rect x="769.5" y="279.5" width="4.2" height="4.200" fill="#40573c"/>
<rect x="769.5" y="283.5" width="4.2" height="4.200" fill="#486642"/>
<rect x="769.5" y="287.5" width="4.2" height="4.200" fill="#456140"/>
<rect x="769.5" y="291.5" width="4.2" height="4.200" fill="#354033"/>
<rect x="781.5" y="275.5" width="4.2" height="4.200" fill="#2f332e"/>
<rect x="781.5" y="279.5" width="4.2" height="4.200" fill="#3a4a37"/>
<rect x="781.5" y="283.5" width="4.2" height="4.200" fill="#3e523a"/>
<rect x="781.5" y="287.5" width="4.2" height="4.200" fill="#3a4a37"/>
<rect x="781.5" y="291.5" width="4.2" height="4.200" fill="#30362f"/>
<rect x="785.5" y="275.5" width="4.2" height="4.200" fill="#30362f"/>
<rect x="785.5" y="279.5" width="4.2" height="4.200" fill="#3a4a37"/>
<rect x="785.5" y="283.5" width="4.2" height="4.200" fill="#3e523a"/>
<rect x="785.5" y="287.5" width="4.2" height="4.200" fill="#435d3e"/>
<rect x="785.5" y="291.5" width="4.2" height="4.200" fill="#323930"/>
<rect x="789.5" y="279.5" width="4.2" height="4.200" fill="#3b4b37"/>
<rect x="789.5" y="283.5" width="4.2" height="4.200" fill="#425a3d"/>
<rect x="789.5" y="287.5" width="4.2" height="4.200" fill="#3c4d38"/>
<rect x="789.5" y="291.5" width="4.2" height="4.200" fill="#31372f"/>
<rect x="793.5" y="279.5" width="4.2" height="4.200" fill="#343e32"/>
<rect x="793.5" y="283.5" width="4.2" height="4.200" fill="#3b4b37"/>
<rect x="793.5" y="287.5" width="4.2" height="4.200" fill="#3a4a37"/>
<rect x="793.5" y="291.5" width="4.2" height="4.200" fill="#2f332e"/>
<rect x="797.5" y="275.5" width="4.2" height="4.200" fill="#30362f"/>
<rect x="797.5" y="279.5" width="4.2" height="4.200" fill="#3e523a"/>
<rect x="797.5" y="283.5" width="4.2" height="4.200" fill="#466341"/>
<rect x="797.5" y="287.5" width="4.2" height="4.200" fill="#3c4e39"/>
<rect x="797.5" y="291.5" width="4.2" height="4.200" fill="#323930"/>
<rect x="801.5" y="275.5" width="4.2" height="4.200" fill="#2f332e"/>
<rect x="801.5" y="279.5" width="4.2" height="4.200" fill="#364334"/>
<rect x="801.5" y="283.5" width="4.2" height="4.200" fill="#3c4d38"/>
<rect x="801.5" y="287.5" width="4.2" height="4.200" fill="#3c4f39"/>
<rect x="801.5" y="291.5" width="4.2" height="4.200" fill="#31372f"/>
<rect x="805.5" y="275.5" width="4.2" height="4.200" fill="#30362f"/>
<rect x="805.5" y="279.5" width="4.2" height="4.200" fill="#3f553b"/>
<rect x="805.5" y="283.5" width="4.2" height="4.200" fill="#496943"/>
<rect x="805.5" y="287.5" width="4.2" height="4.200" fill="#425a3d"/>
<rect x="805.5" y="291.5" width="4.2" height="4.200" fill="#323a31"/>
<rect x="809.5" y="279.5" width="4.2" height="4.200" fill="#394836"/>
<rect x="809.5" y="283.5" width="4.2" height="4.200" fill="#435d3e"/>
<rect x="809.5" y="287.5" width="4.2" height="4.200" fill="#40553b"/>
<rect x="809.5" y="291.5" width="4.2" height="4.200" fill="#313830"/>
<rect x="813.5" y="275.5" width="4.2" height="4.200" fill="#2f332e"/>
<rect x="813.5" y="279.5" width="4.2" height="4.200" fill="#384635"/>
<rect x="813.5" y="283.5" width="4.2" height="4.200" fill="#3e533a"/>
<rect x="813.5" y="287.5" width="4.2" height="4.200" fill="#3f553b"/>
<rect x="813.5" y="291.5" width="4.2" height="4.200" fill="#323a31"/>
<rect x="817.5" y="275.5" width="4.2" height="4.200" fill="#2f342e"/>
<rect x="817.5" y="279.5" width="4.2" height="4.200" fill="#3b4d38"/>
<rect x="817.5" y="283.5" width="4.2" height="4.200" fill="#40573c"/>
<rect x="817.5" y="287.5" width="4.2" height="4.200" fill="#3d5039"/>
<rect x="817.5" y="291.5" width="4.2" height="4.200" fill="#313830"/>
<rect x="821.5" y="275.5" width="4.2" height="4.200" fill="#2f332e"/>
<rect x="821.5" y="279.5" width="4.2" height="4.200" fill="#384635"/>
<rect x="821.5" y="283.5" width="4.2" height="4.200" fill="#3f533a"/>
<rect x="821.5" y="287.5" width="4.2" height="4.200" fill="#3e513a"/>
<rect x="821.5" y="291.5" width="4.2" height="4.200" fill="#313830"/>
<rect x="825.5" y="275.5" width="4.2" height="4.200" fill="#2f342e"/>
<rect x="825.5" y="279.5" width="4.2" height="4.200" fill="#3a4a37"/>
<rect x="825.5" y="283.5" width="4.2" height="4.200" fill="#3e533a"/>
<rect x="825.5" y="287.5" width="4.2" height="4.200" fill="#384535"/>
<rect x="825.5" y="291.5" width="4.2" height="4.200" fill="#30362f"/>
<rect x="829.5" y="275.5" width="4.2" height="4.200" fill="#2f332e"/>
<rect x="829.5" y="279.5" width="4.2" height="4.200" fill="#384636"/>
<rect x="829.5" y="283.5" width="4.2" height="4.200" fill="#40553b"/>
<rect x="829.5" y="287.5" width="4.2" height="4.200" fill="#3b4d38"/>
<rect x="829.5" y="291.5" width="4.2" height="4.200" fill="#313730"/>
<rect x="833.5" y="275.5" width="4.2" height="4.200" fill="#2f332e"/>
<rect x="833.5" y="279.5" width="4.2" height="4.200" fill="#3b4c38"/>
<rect x="833.5" y="283.5" width="4.2" height="4.200" fill="#41593d"/>
<rect x="833.5" y="287.5" width="4.2" height="4.200" fill="#3a4b37"/>
<rect x="833.5" y="291.5" width="4.2" height="4.200" fill="#313830"/>
<rect x="837.5" y="275.5" width="4.2" height="4.200" fill="#30362f"/>
<rect x="837.5" y="279.5" width="4.2" height="4.200" fill="#435b3e"/>
<rect x="837.5" y="283.5" width="4.2" height="4.200" fill="#4a6b44"/>
<rect x="837.5" y="287.5" width="4.2" height="4.200" fill="#41593d"/>
<rect x="837.5" y="291.5" width="4.2" height="4.200" fill="#333b31"/>
<rect x="849.5" y="275.5" width="4.2" height="4.200" fill="#2f332e"/>
<rect x="849.5" y="279.5" width="4.2" height="4.200" fill="#394836"/>
<rect x="849.5" y="283.5" width="4.2" height="4.200" fill="#3f533b"/>
<rect x="849.5" y="287.5" width="4.2" height="4.200" fill="#374434"/>
<rect x="849.5" y="291.5" width="4.2" height="4.200" fill="#2f342e"/>
<rect x="861.5" y="279.5" width="4.2" height="4.200" fill="#3b4b37"/>
<rect x="861.5" y="283.5" width="4.2" height="4.200" fill="#3f543b"/>
<rect x="861.5" y="287.5" width="4.2" height="4.200" fill="#3e523a"/>
<rect x="861.5" y="291.5" width="4.2" height="4.200" fill="#313830"/>
<rect x="865.5" y="275.5" width="4.2" height="4.200" fill="#30352f"/>
<rect x="865.5" y="279.5" width="4.2" height="4.200" fill="#384535"/>
<rect x="865.5" y="283.5" width="4.2" height="4.200" fill="#40563c"/>
<rect x="865.5" y="287.5" width="4.2" height="4.200" fill="#3c4e38"/>
<rect x="865.5" y="291.5" width="4.2" height="4.200" fill="#313830"/>
<rect x="869.5" y="275.5" width="4.2" height="4.200" fill="#2f342e"/>
<rect x="869.5" y="279.5" width="4.2" height="4.200" fill="#394836"/>
<rect x="869.5" y="283.5" width="4.2" height="4.200" fill="#3b4c38"/>
<rect x="869.5" y="287.5" width="4.2" height="4.200" fill="#3d5039"/>
<rect x="869.5" y="291.5" width="4.2" height="4.200" fill="#30352f"/>
<rect x="873.5" y="275.5" width="4.2" height="4.200" fill="#30352f"/>
<rect x="873.5" y="279.5" width="4.2" height="4.200" fill="#40553b"/>
<rect x="873.5" y="283.5" width="4.2" height="4.200" fill="#4b6c44"/>
<rect x="873.5" y="287.5" width="4.2" height="4.200" fill="#45603f"/>
<rect x="873.5" y="291.5" width="4.2" height="4.200" fill="#323a31"/>
<rect x="877.5" y="275.5" width="4.2" height="4.200" fill="#313830"/>
<rect x="877.5" y="279.5" width="4.2" height="4.200" fill="#41583c"/>
<rect x="877.5" y="283.5" width="4.2" height="4.200" fill="#456040"/>
<rect x="877.5" y="287.5" width="4.2" height="4.200" fill="#466341"/>
<rect x="877.5" y="291.5" width="4.2" height="4.200" fill="#343e32"/>
<rect x="881.5" y="275.5" width="4.2" height="4.200" fill="#333b31"/>
<rect x="881.5" y="279.5" width="4.2" height="4.200" fill="#456040"/>
<rect x="881.5" y="283.5" width="4.2" height="4.200" fill="#4a6a44"/>
<rect x="881.5" y="287.5" width="4.2" height="4.200" fill="#4c6e45"/>
<rect x="881.5" y="291.5" width="4.2" height="4.200" fill="#323b31"/>
<rect x="885.5" y="275.5" width="4.2" height="4.200" fill="#2f332e"/>
<rect x="885.5" y="279.5" width="4.2" height="4.200" fill="#3b4b37"/>
<rect x="885.5" y="283.5" width="4.2" height="4.200" fill="#3c4e38"/>
<rect x="885.5" y="287.5" width="4.2" height="4.200" fill="#3d5039"/>
<rect x="885.5" y="291.5" width="4.2" height="4.200" fill="#323930"/>
<rect x="889.5" y="275.5" width="4.2" height="4.200" fill="#2f342e"/>
<rect x="889.5" y="279.5" width="4.2" height="4.200" fill="#3b4c38"/>
<rect x="889.5" y="283.5" width="4.2" height="4.200" fill="#41583c"/>
<rect x="889.5" y="287.5" width="4.2" height="4.200" fill="#445d3f"/>
<rect x="889.5" y="291.5" width="4.2" height="4.200" fill="#323930"/>
<rect x="893.5" y="275.5" width="4.2" height="4.200" fill="#323b31"/>
<rect x="893.5" y="279.5" width="4.2" height="4.200" fill="#45603f"/>
<rect x="893.5" y="283.5" width="4.2" height="4.200" fill="#496843"/>
<rect x="893.5" y="287.5" width="4.2" height="4.200" fill="#4d7046"/>
<rect x="893.5" y="291.5" width="4.2" height="4.200" fill="#353f33"/>
<rect x="897.5" y="275.5" width="4.2" height="4.200" fill="#2f342e"/>
<rect x="897.5" y="279.5" width="4.2" height="4.200" fill="#41593d"/>
<rect x="897.5" y="283.5" width="4.2" height="4.200" fill="#445d3f"/>
<rect x="897.5" y="287.5" width="4.2" height="4.200" fill="#3e523a"/>
<rect x="897.5" y="291.5" width="4.2" height="4.200" fill="#323a30"/>
<rect x="901.5" y="275.5" width="4.2" height="4.200" fill="#2f332e"/>
<rect x="901.5" y="279.5" width="4.2" height="4.200" fill="#3a4937"/>
<rect x="901.5" y="283.5" width="4.2" height="4.200" fill="#3d513a"/>
<rect x="901.5" y="287.5" width="4.2" height="4.200" fill="#3e523a"/>
<rect x="901.5" y="291.5" width="4.2" height="4.200" fill="#323930"/>
<rect x="905.5" y="279.5" width="4.2" height="4.200" fill="#374535"/>
<rect x="905.5" y="283.5" width="4.2" height="4.200" fill="#41583d"/>
<rect x="905.5" y="287.5" width="4.2" height="4.200" fill="#3d4f39"/>
<rect x="905.5" y="291.5" width="4.2" height="4.200" fill="#30352f"/>
<rect x="909.5" y="275.5" width="4.2" height="4.200" fill="#2e322e"/>
<rect x="909.5" y="279.5" width="4.2" height="4.200" fill="#3f553b"/>
<rect x="909.5" y="283.5" width="4.2" height="4.200" fill="#40553b"/>
<rect x="909.5" y="287.5" width="4.2" height="4.200" fill="#3f543b"/>
<rect x="909.5" y="291.5" width="4.2" height="4.200" fill="#313830"/>
<rect x="913.5" y="275.5" width="4.2" height="4.200" fill="#31372f"/>
<rect x="913.5" y="279.5" width="4.2" height="4.200" fill="#425b3e"/>
<rect x="913.5" y="283.5" width="4.2" height="4.200" fill="#435b3e"/>
<rect x="913.5" y="287.5" width="4.2" height="4.200" fill="#466240"/>
<rect x="913.5" y="291.5" width="4.2" height="4.200" fill="#323b31"/>
<rect x="917.5" y="275.5" width="4.2" height="4.200" fill="#30352f"/>
<rect x="917.5" y="279.5" width="4.2" height="4.200" fill="#3d5039"/>
<rect x="917.5" y="283.5" width="4.2" height="4.200" fill="#466240"/>
<rect x="917.5" y="287.5" width="4.2" height="4.200" fill="#41583d"/>
<rect x="917.5" y="291.5" width="4.2" height="4.200" fill="#323a31"/>
<rect x="921.5" y="275.5" width="4.2" height="4.200" fill="#313730"/>
<rect x="921.5" y="279.5" width="4.2" height="4.200" fill="#3d5039"/>
<rect x="921.5" y="283.5" width="4.2" height="4.200" fill="#466240"/>
<rect x="921.5" y="287.5" width="4.2" height="4.200" fill="#445e3f"/>
<rect x="921.5" y="291.5" width="4.2" height="4.200" fill="#354033"/>
<rect x="925.5" y="275.5" width="4.2" height="4.200" fill="#313830"/>
<rect x="925.5" y="279.5" width="4.2" height="4.200" fill="#3e523a"/>
<rect x="925.5" y="283.5" width="4.2" height="4.200" fill="#4f7448"/>
<rect x="925.5" y="287.5" width="4.2" height="4.200" fill="#456140"/>
<rect x="925.5" y="291.5" width="4.2" height="4.200" fill="#353f33"/>
<rect x="929.5" y="275.5" width="4.2" height="4.200" fill="#313730"/>
<rect x="929.5" y="279.5" width="4.2" height="4.200" fill="#41573c"/>
<rect x="929.5" y="283.5" width="4.2" height="4.200" fill="#4e7146"/>
<rect x="929.5" y="287.5" width="4.2" height="4.200" fill="#435b3e"/>
<rect x="929.5" y="291.5" width="4.2" height="4.200" fill="#333c31"/>
<rect x="933.5" y="275.5" width="4.2" height="4.200" fill="#30362f"/>
<rect x="933.5" y="279.5" width="4.2" height="4.200" fill="#40573c"/>
<rect x="933.5" y="283.5" width="4.2" height="4.200" fill="#4f7448"/>
<rect x="933.5" y="287.5" width="4.2" height="4.200" fill="#41573c"/>
<rect x="933.5" y="291.5" width="4.2" height="4.200" fill="#354133"/>
<rect x="937.5" y="275.5" width="4.2" height="4.200" fill="#30362f"/>
<rect x="937.5" y="279.5" width="4.2" height="4.200" fill="#3f533b"/>
<rect x="937.5" y="283.5" width="4.2" height="4.200" fill="#4c6e45"/>
<rect x="937.5" y="287.5" width="4.2" height="4.200" fill="#486642"/>
<rect x="937.5" y="291.5" width="4.2" height="4.200" fill="#323a31"/>
<rect x="941.5" y="275.5" width="4.2" height="4.200" fill="#30352f"/>
<rect x="941.5" y="279.5" width="4.2" height="4.200" fill="#3e523a"/>
<rect x="941.5" y="283.5" width="4.2" height="4.200" fill="#435c3e"/>
<rect x="941.5" y="287.5" width="4.2" height="4.200" fill="#3e513a"/>
<rect x="941.5" y="291.5" width="4.2" height="4.200" fill="#333b31"/>
<rect x="945.5" y="275.5" width="4.2" height="4.200" fill="#30352f"/>
<rect x="945.5" y="279.5" width="4.2" height="4.200" fill="#3f553b"/>
<rect x="945.5" y="283.5" width="4.2" height="4.200" fill="#4e7347"/>
<rect x="945.5" y="287.5" width="4.2" height="4.200" fill="#496742"/>
<rect x="945.5" y="291.5" width="4.2" height="4.200" fill="#353f33"/>
<rect x="949.5" y="275.5" width="4.2" height="4.200" fill="#2f332e"/>
<rect x="949.5" y="279.5" width="4.2" height="4.200" fill="#3c4e38"/>
<rect x="949.5" y="283.5" width="4.2" height="4.200" fill="#425a3d"/>
<rect x="949.5" y="287.5" width="4.2" height="4.200" fill="#3c4e39"/>
<rect x="949.5" y="291.5" width="4.2" height="4.200" fill="#2f342e"/>
<rect x="953.5" y="275.5" width="4.2" height="4.200" fill="#30362f"/>
<rect x="953.5" y="279.5" width="4.2" height="4.200" fill="#445e3f"/>
<rect x="953.5" y="283.5" width="4.2" height="4.200" fill="#517749"/>
<rect x="953.5" y="287.5" width="4.2" height="4.200" fill="#486642"/>
<rect x="953.5" y="291.5" width="4.2" height="4.200" fill="#333b31"/>
<rect x="957.5" y="275.5" width="4.2" height="4.200" fill="#30362f"/>
<rect x="957.5" y="279.5" width="4.2" height="4.200" fill="#394936"/>
<rect x="957.5" y="283.5" width="4.2" height="4.200" fill="#435c3e"/>
<rect x="957.5" y="287.5" width="4.2" height="4.200" fill="#3e513a"/>
<rect x="957.5" y="291.5" width="4.2" height="4.200" fill="#31372f"/>
<rect x="961.5" y="275.5" width="4.2" height="4.200" fill="#2f342e"/>
<rect x="961.5" y="279.5" width="4.2" height="4.200" fill="#3c4f39"/>
<rect x="961.5" y="283.5" width="4.2" height="4.200" fill="#466140"/>
<rect x="961.5" y="287.5" width="4.2" height="4.200" fill="#3e533a"/>
<rect x="961.5" y="291.5" width="4.2" height="4.200" fill="#313930"/>
<rect x="965.5" y="275.5" width="4.2" height="4.200" fill="#31372f"/>
<rect x="965.5" y="279.5" width="4.2" height="4.200" fill="#435b3e"/>
<rect x="965.5" y="283.5" width="4.2" height="4.200" fill="#425a3d"/>
<rect x="965.5" y="287.5" width="4.2" height="4.200" fill="#41593d"/>
<rect x="965.5" y="291.5" width="4.2" height="4.200" fill="#323a31"/>
<rect x="969.5" y="275.5" width="4.2" height="4.200" fill="#30362f"/>
<rect x="969.5" y="279.5" width="4.2" height="4.200" fill="#445d3e"/>
<rect x="969.5" y="283.5" width="4.2" height="4.200" fill="#456040"/>
<rect x="969.5" y="287.5" width="4.2" height="4.200" fill="#3e523a"/>
<rect x="969.5" y="291.5" width="4.2" height="4.200" fill="#343d32"/>
<rect x="973.5" y="275.5" width="4.2" height="4.200" fill="#2f342e"/>
<rect x="973.5" y="279.5" width="4.2" height="4.200" fill="#3a4b37"/>
<rect x="973.5" y="283.5" width="4.2" height="4.200" fill="#435d3e"/>
<rect x="973.5" y="287.5" width="4.2" height="4.200" fill="#3d5039"/>
<rect x="973.5" y="291.5" width="4.2" height="4.200" fill="#313830"/>
<rect x="977.5" y="275.5" width="4.2" height="4.200" fill="#2f342e"/>
<rect x="977.5" y="279.5" width="4.2" height="4.200" fill="#3a4a37"/>
<rect x="977.5" y="283.5" width="4.2" height="4.200" fill="#445e3f"/>
<rect x="977.5" y="287.5" width="4.2" height="4.200" fill="#3e523a"/>
<rect x="977.5" y="291.5" width="4.2" height="4.200" fill="#30362f"/>
<rect x="981.5" y="275.5" width="4.2" height="4.200" fill="#2f332e"/>
<rect x="981.5" y="279.5" width="4.2" height="4.200" fill="#3d5039"/>
<rect x="981.5" y="283.5" width="4.2" height="4.200" fill="#3e523a"/>
<rect x="981.5" y="287.5" width="4.2" height="4.200" fill="#3f553b"/>
<rect x="981.5" y="291.5" width="4.2" height="4.200" fill="#323930"/>
<rect x="985.5" y="275.5" width="4.2" height="4.200" fill="#2f332e"/>
<rect x="985.5" y="279.5" width="4.2" height="4.200" fill="#374434"/>
<rect x="985.5" y="283.5" width="4.2" height="4.200" fill="#3b4d38"/>
<rect x="985.5" y="287.5" width="4.2" height="4.200" fill="#3c4f39"/>
<rect x="985.5" y="291.5" width="4.2" height="4.200" fill="#30352f"/>
<rect x="989.5" y="275.5" width="4.2" height="4.200" fill="#313830"/>
<rect x="989.5" y="279.5" width="4.2" height="4.200" fill="#41583c"/>
<rect x="989.5" y="283.5" width="4.2" height="4.200" fill="#4f7448"/>
<rect x="989.5" y="287.5" width="4.2" height="4.200" fill="#41573c"/>
<rect x="989.5" y="291.5" width="4.2" height="4.200" fill="#354033"/>
<rect x="993.5" y="279.5" width="4.2" height="4.200" fill="#3c4e39"/>
<rect x="993.5" y="283.5" width="4.2" height="4.200" fill="#40553b"/>
<rect x="993.5" y="287.5" width="4.2" height="4.200" fill="#394836"/>
<rect x="993.5" y="291.5" width="4.2" height="4.200" fill="#2f352e"/>
<rect x="997.5" y="275.5" width="4.2" height="4.200" fill="#323930"/>
<rect x="997.5" y="279.5" width="4.2" height="4.200" fill="#476542"/>
<rect x="997.5" y="283.5" width="4.2" height="4.200" fill="#476541"/>
<rect x="997.5" y="287.5" width="4.2" height="4.200" fill="#496843"/>
<rect x="997.5" y="291.5" width="4.2" height="4.200" fill="#343e32"/>
<rect x="1001.5" y="279.5" width="4.2" height="4.200" fill="#333b31"/>
<rect x="1001.5" y="283.5" width="4.2" height="4.200" fill="#343f32"/>
<rect x="1001.5" y="287.5" width="4.2" height="4.200" fill="#333c31"/>
<rect x="1005.5" y="279.5" width="4.2" height="4.200" fill="#374435"/>
<rect x="1005.5" y="283.5" width="4.2" height="4.200" fill="#394836"/>
<rect x="1005.5" y="287.5" width="4.2" height="4.200" fill="#394836"/>
<rect x="1005.5" y="291.5" width="4.2" height="4.200" fill="#2f342e"/>
<rect x="1009.5" y="279.5" width="4.2" height="4.200" fill="#354133"/>
<rect x="1009.5" y="283.5" width="4.2" height="4.200" fill="#374435"/>
<rect x="1009.5" y="287.5" width="4.2" height="4.200" fill="#343d32"/>
<rect x="1013.5" y="279.5" width="4.2" height="4.200" fill="#343d32"/>
<rect x="1013.5" y="283.5" width="4.2" height="4.200" fill="#353f33"/>
<rect x="1013.5" y="287.5" width="4.2" height="4.200" fill="#343e32"/>
<rect x="1017.5" y="279.5" width="4.2" height="4.200" fill="#343e32"/>
<rect x="1017.5" y="283.5" width="4.2" height="4.200" fill="#364334"/>
<rect x="1017.5" y="287.5" width="4.2" height="4.200" fill="#353f33"/>
<rect x="1021.5" y="279.5" width="4.2" height="4.200" fill="#323930"/>
<rect x="1021.5" y="283.5" width="4.2" height="4.200" fill="#343e32"/>
<rect x="1021.5" y="287.5" width="4.2" height="4.200" fill="#343e32"/>
<rect x="1025.5" y="279.5" width="4.2" height="4.200" fill="#313830"/>
<rect x="1025.5" y="283.5" width="4.2" height="4.200" fill="#343e32"/>
<rect x="1025.5" y="287.5" width="4.2" height="4.200" fill="#333b31"/>
<rect x="1029.5" y="279.5" width="4.2" height="4.200" fill="#313830"/>
<rect x="1029.5" y="283.5" width="4.2" height="4.200" fill="#354033"/>
<rect x="1029.5" y="287.5" width="4.2" height="4.200" fill="#333b31"/>
<rect x="1033.5" y="279.5" width="4.2" height="4.200" fill="#323a31"/>
<rect x="1033.5" y="283.5" width="4.2" height="4.200" fill="#384535"/>
<rect x="1033.5" y="287.5" width="4.2" height="4.200" fill="#343e32"/>
<rect x="1033.5" y="291.5" width="4.2" height="4.200" fill="#2e332e"/>
<path d="M653.500 199.500h10v8l-5 5-5-5z" fill="#313335" stroke="#606366" stroke-width="1"/><path d="M656 204.500h5" stroke="#606366" stroke-width="1"/>
<path d="M653.500 342.500h10v-8l-5-5-5 5z" fill="#313335" stroke="#606366" stroke-width="1"/><path d="M656 337.500h5" stroke="#606366" stroke-width="1"/>
<g stroke="#7d8183" stroke-width="1.300" fill="none"><path d="M625.500 200v11.500"/><path d="M628.500 201.500h10M628.500 205.500h10M628.500 209.500h6"/></g>
<path d="M273.6 404.6l8.800 8.800M282.400 404.6l-8.800 8.800" stroke="#7b8794" stroke-width="1.200" fill="none"/>
<path d="M491.6 404.6l8.800 8.800M500.400 404.6l-8.800 8.800" stroke="#7b8794" stroke-width="1.200" fill="none"/>
<path d="M598.6 404.6l8.800 8.800M607.400 404.6l-8.800 8.800" stroke="#7b8794" stroke-width="1.200" fill="none"/>
<path d="M778.6 404.6l8.800 8.800M787.400 404.6l-8.800 8.800" stroke="#7b8794" stroke-width="1.200" fill="none"/>
<path d="M1846.78 402.83L1846.45 400.54L1843.55 400.54L1843.22 402.83L1841.41 403.87L1839.26 403.01L1837.81 405.53L1839.63 406.96L1839.63 409.04L1837.81 410.47L1839.26 412.99L1841.41 412.13L1843.22 413.17L1843.55 415.46L1846.45 415.46L1846.78 413.17L1848.59 412.13L1850.74 412.99L1852.19 410.47L1850.37 409.04L1850.37 406.96L1852.19 405.53L1850.74 403.01L1848.59 403.87Z" fill="#afb1b3" stroke="#afb1b3" stroke-width=".8" stroke-linejoin="round"/><circle cx="1845" cy="408" r="2.736" fill="#3b4754"/>
<rect x="1870" y="407.200" width="15" height="1.800" fill="#afb1b3"/>
<path d="M40.500 437.500l7.500 7.500-7.500 7.500" stroke="#afb1b3" stroke-width="2" fill="none"/>
<circle cx="84.500" cy="442.500" r="4.800" stroke="#8a8d8f" stroke-width="1.400" fill="none"/><path d="M88 446.500l4 4.200" stroke="#8a8d8f" stroke-width="1.500"/><path d="M92.500 442.500h5l-2.500 3z" fill="#8a8d8f"/>
<path d="M301.19 438.10L300.87 435.93L298.13 435.93L297.81 438.10L296.10 439.09L294.07 438.28L292.69 440.66L294.41 442.01L294.41 443.99L292.69 445.34L294.07 447.72L296.10 446.91L297.81 447.90L298.13 450.07L300.87 450.07L301.19 447.90L302.90 446.91L304.93 447.72L306.31 445.34L304.59 443.99L304.59 442.01L306.31 440.66L304.93 438.28L302.90 439.09Z" fill="#afb1b3" stroke="#afb1b3" stroke-width=".8" stroke-linejoin="round"/><circle cx="299.5" cy="443" r="2.592" fill="#3c3f41"/>
<path d="M303.500 451h5.500l-2.750 3.200z" fill="#afb1b3"/>
<path d="M434 442h6l-3-3.800z M434 446h6l-3 3.800z" fill="#9da0a2"/>
<path d="M517.5 442h6l-3-3.800z M517.5 446h6l-3 3.800z" fill="#9da0a2"/>
<path d="M601 442h6l-3-3.800z M601 446h6l-3 3.800z" fill="#9da0a2"/>
<path d="M690 442h6l-3-3.800z M690 446h6l-3 3.800z" fill="#9da0a2"/>
<g stroke="#afb1b3" stroke-width="2.200" fill="none"><path d="M734.300 442.500a6.300 6.300 0 0 0-11.300-3"/><path d="M722 446a6.300 6.300 0 0 0 11.300 3"/></g><path d="M720.200 436.900v6.300h6.300z M736.100 451.400v-6.300h-6.300z" fill="#afb1b3"/>
<g fill="#afb1b3"><circle cx="756.300" cy="445.800" r="3.800"/><circle cx="763.300" cy="448.300" r="4.200"/><path d="M767.500 436.200c-5.500.8-9.500 3.800-11.500 8l1.800.4c1.700-2.800 3.700-4.300 6-5.200-.8 2.200-1.200 4-1.100 5.500l1.700 0c0-3.200 1.200-6.200 3.100-8.700z"/></g>
<g stroke="#afb1b3" stroke-width="2.100" fill="none"><path d="M789 436.400v11"/><path d="M798.600 436.400v15"/></g><path d="M784.300 446.200h9.400l-4.700 5.300z" fill="#afb1b3"/><path d="M798.600 437.300l2.700 2.900-2.700 2.900-2.700-2.900z M798.600 445.300l2.700 2.900-2.700 2.900-2.700-2.900z" fill="#afb1b3"/>
<path d="M816 444c2.600-4.400 5.400-6.500 8.800-6.500s6.200 2.100 8.800 6.500c-2.600 4.400-5.400 6.500-8.800 6.500s-6.200-2.100-8.800-6.500z" fill="#afb1b3"/><circle cx="824.800" cy="444" r="3.900" fill="#3c3f41"/><circle cx="824.800" cy="444" r="2" fill="#afb1b3"/><path d="M828.800 451h7.200l-3.600 4.200z" fill="#afb1b3" stroke="#3c3f41" stroke-width=".8"/>
<g stroke="#afb1b3" stroke-width="1.900" fill="none"><path d="M856.300 451c1.500-.8 2.300-2 2.300-4v-7c0-2.200 1.300-3.500 3.500-3.500h7.800c2.200 0 3.500 1.300 3.500 3.500v7c0 2 .8 3.200 2.300 4"/><path d="M866 439.800v8.400M861.800 444h8.400"/></g>
<circle cx="1099" cy="441.500" r="5.800" stroke="#afb1b3" stroke-width="2.200" fill="none"/><path d="M1103 446l5.500 6" stroke="#afb1b3" stroke-width="2.600"/>
<rect x="72.500" y="479" width="2" height="90" fill="#8aa16d"/>
<circle cx="73.500" cy="479" r="5" fill="#8aa16d"/>
<circle cx="73.500" cy="509" r="5" fill="#8aa16d"/>
<circle cx="73.500" cy="539" r="5" fill="#8aa16d"/>
<circle cx="73.500" cy="569" r="5" fill="#8aa16d"/>
<g transform="translate(849,470)"><path d="M8 1.500h6l7 7.500-6 7-7-7z" fill="#3dae4a"/><path d="M1 1h7l8 8.500-6.500 7-8.500-8.500z" fill="#e8c62a" stroke="#4c5052" stroke-width="1"/><circle cx="4.800" cy="5" r="1.400" fill="#4c5052"/></g>
<g transform="translate(814,531)"><path d="M.5 .5h7l8 8.500-6.500 7-8.500-8.500z" fill="#a674c4"/><circle cx="4.300" cy="4.500" r="1.400" fill="#4c5052"/></g>
<g fill="#3592c4"><rect x="1143.500" y="439" width="5.600" height="2.200"/><path d="M1138.600 440.200l5.500-5.300v10.600z"/><rect x="1131" y="446.700" width="5.500" height="2.200"/><path d="M1141.500 447.800l-5.500-5.300v10.600z"/></g>
<g stroke="#5e6162" stroke-width="2" fill="none"><path d="M1171 435.500l-5 4.700 5 4.700"/><path d="M1166.500 440.200h9.500a5.200 5.200 0 0 1 0 10.400h-5"/></g>
<circle cx="1205" cy="443.700" r="7.800" stroke="#5e6162" stroke-width="1.900" fill="none"/><path d="M1204.500 439v5l3.500 2.500" stroke="#5e6162" stroke-width="1.700" fill="none"/>
<g fill="#afb1b3"><rect x="1240" y="437.800" width="5.200" height="5.200"/><rect x="1247.300" y="437.800" width="5.200" height="5.200"/><rect x="1240" y="444.900" width="5.200" height="5.200"/><rect x="1247.300" y="444.900" width="5.200" height="5.200"/><path d="M1250.500 451h7.500l-3.750 4z"/></g>
<g fill="#afb1b3"><rect x="1280" y="437.800" width="9" height="5.700"/><rect x="1290.800" y="437.800" width="5" height="5.700"/><rect x="1280" y="444.900" width="15.800" height="5.200"/><path d="M1291.800 451h7.500l-3.750 4z"/></g>
<g fill="#afb1b3"><rect x="1835.500" y="436" width="14" height="1.700"/><rect x="1835.500" y="450" width="14" height="1.700"/><path d="M1839 443h7l-3.500-4z M1839 445h7l-3.500 4z"/></g>
<g fill="#afb1b3"><rect x="1868" y="443" width="15" height="1.700"/><path d="M1872 436h7l-3.500 4.500z M1872 452h7l-3.500-4.500z"/></g>
<path d="M1126 472.500h10.600l-5.300 9.200z" fill="#9da0a2"/>
<path d="M1146 470h6.400l2.200 2.800h9.400v11.400h-18z" fill="#87939a"/>
<rect x="1155.8" y="479" width="10" height="10" fill="#3c3f41"/>
<rect x="1157.1" y="480.4" width="8" height="7.700" fill="#40b6e0"/>
<path d="M1148 497.500h10.600l-5.300 9.200z" fill="#9da0a2"/>
<path d="M1170 495h6l2 2.500h9.500v11h-17.500z" fill="#87939a"/>
<g transform="translate(1192,519)"><path d="M6 0h7.500v9h-10.500v-5.500z" fill="#afb1b3"/><path d="M5.500 0v3.500h-3.500z" fill="#3c3f41"/><path d="M2.500 3.800l3.500-3.800v3.800z" fill="#d0d2d4"/><rect x="0" y="9.500" width="19" height="8.500" fill="#3a9fc0"/><path d="M3.800 11v4.200c0 .9-.5 1.300-1.300 1.300" stroke="#1f3f4c" stroke-width="1.200" fill="none"/></g>
<g fill="#afb1b3"><rect x="42" y="998" width="2.200" height="2"/><rect x="45.500" y="998" width="10" height="2"/><rect x="42" y="1002" width="2.200" height="2"/><rect x="45.500" y="1002" width="10" height="2"/><rect x="42" y="1006" width="2.200" height="2"/><rect x="45.500" y="1006" width="10" height="2"/></g>
<g stroke="#c8c8c8" stroke-width="2" fill="none"><path d="M144 997v13"/><path d="M144 1004.500h7.500"/><path d="M148 1000.500l3.500-3.500 3.500 3.500M151.500 997.500v7"/></g>
<rect x="219.500" y="996.500" width="14.500" height="13" fill="#afb1b3"/><path d="M222.500 999.500l3.500 3-3.500 3" stroke="#3c3f41" stroke-width="1.500" fill="none"/><path d="M227 1006.500h4.500" stroke="#3c3f41" stroke-width="1.500"/>
<path d="M316.500 1007.500c1-7 7-10.500 16-10.500-1 9-6 13.500-12 12.500-1 0-2.500-.5-4-2z" fill="#afb1b3"/><path d="M316 1008.500c4-1 8-3.500 11.500-8" stroke="#3c3f41" stroke-width="1" fill="none"/>
<circle cx="1806.500" cy="1004.500" r="8" fill="#f2a62a"/>
<g stroke="#9a9da0" stroke-width="1.300" fill="none"><rect x="11.500" y="1023.500" width="11" height="11"/><path d="M8.500 1026.500v11h11"/></g>
<g fill="#afb1b3"><rect x="1642" y="1030" width="9.500" height="7.500"/></g><path d="M1644 1030v-3a2.800 2.800 0 0 0-5.600 0v2" stroke="#afb1b3" stroke-width="1.500" fill="none"/>
<g fill="#afb1b3"><path d="M1669 1028.500h15v1.500h-15z M1671.500 1028l1-4.500h8l1 4.500z"/><path d="M1671.500 1031h10c0 4-2 6.500-5 6.500s-5-2.500-5-6.500z"/></g><circle cx="1674.300" cy="1032.800" r="1.100" fill="#3c3f41"/><circle cx="1678.700" cy="1032.800" r="1.100" fill="#3c3f41"/><path d="M1674.500 1035.500h4" stroke="#3c3f41" stroke-width=".9"/>
<g stroke="#afb1b3" stroke-width="1.800" fill="none"><path d="M1703.500 1026v12"/><path d="M1711 1027.500v2c0 2.500-2 3.500-7.500 4.500"/></g><g fill="#afb1b3"><circle cx="1703.500" cy="1025" r="2.300"/><circle cx="1703.500" cy="1038" r="2.300"/><circle cx="1711" cy="1026" r="2.300"/></g>
<g transform="translate(1861.500,1021.500)" fill="none" stroke-width="3"><path d="M13.800 3.800a7 7 0 0 0-9.800-.6" stroke="#ea4335"/><path d="M3.300 3.900a7 7 0 0 0-.6 9" stroke="#fbbc05"/><path d="M2.400 12.400a7 7 0 0 0 9.800 1.500" stroke="#34a853"/><path d="M12.500 13.600a7 7 0 0 0 2.400-5.600h-6.800" stroke="#4285f4"/></g>
<circle cx="1898.700" cy="1029.500" r="7.600" fill="#c8434b"/><rect x="1897.500" y="1024.500" width="2.400" height="6.500" fill="#3c3f41"/><rect x="1897.500" y="1032.500" width="2.400" height="2.400" fill="#3c3f41"/>
<path d="M1485.800 922l8.800 15h-17.600z" fill="#f0a732"/><rect x="1484.800" y="927" width="2" height="5" fill="#4e5052"/><rect x="1484.800" y="933.200" width="2" height="2" fill="#4e5052"/>
<path d="M7 149h5.500l1.700 2h7.300v9.500h-14.500z" fill="#c4c6c8"/>
<g fill="#9da0a2"><rect x="8.500" y="276" width="5.500" height="5"/><rect x="15" y="276" width="5.500" height="5"/><rect x="15" y="269.500" width="5.500" height="5"/></g>
<circle cx="14.500" cy="371.500" r="3.400" stroke="#afb1b3" stroke-width="2" fill="none"/><path d="M6 371.500h5M18 371.500h5" stroke="#afb1b3" stroke-width="2"/>
<path d="M14.500 875l2.500 5.300 5.800.6-4.400 3.900 1.300 5.700-5.200-3-5.200 3 1.300-5.700-4.400-3.900 5.800-.6z" fill="#c4c6c8"/>
<g transform="translate(6,959.500)"><path d="M16.500 0c-5.500 0-10 2.500-12.500 7l-3.500 1 0 1.500 3 1 -1.500 2.500 1.500 1.500 2.500-1.500 1 3 1.500 0 1-3.500c4.500-2.500 7-7 7-12.500z" fill="#8cc63f"/><circle cx="11.500" cy="5" r="1.300" fill="#e8f5d0"/><path d="M3 9.500l-2.500 4 3.500-1z" fill="#5d8f2a"/><text x="9" y="16.800" font-family="Liberation Sans" font-size="7.500" font-weight="bold" fill="#e6e6e6">JR</text></g>
<g fill="#c4c6c8"><ellipse cx="1908" cy="88.300" rx="7.800" ry="3"/><path d="M1900.200 90.800c2 2.800 13.600 2.800 15.600 0v2.600c-2 2.800-13.600 2.800-15.600 0z M1900.200 94.600c2 2.800 13.600 2.800 15.600 0v2.600c-2 2.800-13.600 2.800-15.600 0z M1900.200 98.400c2 2.800 13.600 2.800 15.600 0v.8c-2 2.800-13.600 2.800-15.600 0z"/></g>
<g transform="translate(1899.500,281.500)"><path d="M16.500 0c-5.500 0-10 2.500-12.500 7l-3.500 1 0 1.500 3 1 -1.500 2.500 1.500 1.500 2.500-1.500 1 3 1.500 0 1-3.500c4.500-2.500 7-7 7-12.500z" fill="#8cc63f"/><circle cx="11.500" cy="5" r="1.300" fill="#e8f5d0"/><path d="M3 9.500l-2.500 4 3.500-1z" fill="#5d8f2a"/><text x="9" y="16.800" font-family="Liberation Sans" font-size="7.500" font-weight="bold" fill="#e6e6e6">JR</text></g>
<g transform="translate(1908,457) scale(.88)" stroke="#b4b6b8" stroke-width="1.200" fill="#b4b6b8"><ellipse cx="0" cy="3" rx="2.300" ry="3.300"/><circle cx="0" cy="-2" r="1.800"/><path d="M-2 0l-5-4M2 0l5-4M-2 2l-6 0M2 2l6 0M-2 4l-5 4M2 4l5 4M-1 -3l-3-4M1-3l3-4" fill="none"/></g>
<g transform="translate(1899.500,620)"><path d="M16.500 0c-5.500 0-10 2.500-12.500 7l-3.500 1 0 1.500 3 1 -1.500 2.500 1.500 1.500 2.500-1.500 1 3 1.500 0 1-3.500c4.500-2.500 7-7 7-12.500z" fill="#8cc63f"/><circle cx="11.500" cy="5" r="1.300" fill="#e8f5d0"/><path d="M3 9.500l-2.500 4 3.500-1z" fill="#5d8f2a"/><text x="9" y="16.800" font-family="Liberation Sans" font-size="7.500" font-weight="bold" fill="#e6e6e6">JR</text></g>
<g transform="translate(1900.500,885)"><rect x=".7" y=".7" width="12.600" height="13" fill="none" stroke="#c4c6c8" stroke-width="1.400"/><rect x="0" y="0" width="4" height="14.400" fill="#c4c6c8"/><path d="M5.500 4h6M5.500 7.200h6M5.500 10.400h6" stroke="#c4c6c8" stroke-width="1.400"/></g>
</svg>
<div class="r" style="left:0px;top:185.5px;width:76px;height:29px;background:#fcfcfc;box-shadow:0 0 3px rgba(0,0,0,.5);"></div>
<div class="r" style="left:0px;top:214px;width:108px;height:29.5px;background:#ebebeb;box-shadow:0 1px 3px rgba(0,0,0,.5);"></div>
<div class="r" style="left:0px;top:214px;width:45px;height:27.5px;background:#a3d58d;"></div>
<div class="r" style="left:9px;top:214px;width:1.2px;height:27.5px;background:#e8f5e0;"></div>
<div class="r" style="left:37.5px;top:186px;width:1px;height:27px;background:#dcdcdc;"></div>
<span class="t" style="left:33.00px;top:219px;font-size:21px;color:#4a4a4a;letter-spacing:-0.710px;">16:27</span>
<span class="t" style="left:1803.50px;top:995px;font-size:11.5px;color:#4a3503;font-weight:bold;">3</span>
<svg class="ov" viewBox="0 0 1920 1042">
<text x="20" y="211.500" font-size="20" text-anchor="middle" fill="#5a5a5a" font-family="'Liberation Sans','Noto Sans CJK SC',sans-serif">中</text>
<path d="M51.500 199.500c2.200 0 3.200 1.300 3.200 2.800 0 2.200-1.700 4.200-3.800 5l-.5-1c1.300-.6 2.200-1.600 2.300-2.800-.2.100-.5.100-.8.100-1.300 0-2.200-.8-2.200-2 0-1.200.9-2.100 1.800-2.100z" fill="#5a5a5a"/><circle cx="61.500" cy="208.500" r="2.600" stroke="#5a5a5a" stroke-width="1.500" fill="none"/>
<path d="M1720.8 199.0L1718.9 98.0" stroke="#ed1c24" stroke-width="3.500" stroke-linecap="round" fill="none"/>
<path d="M1718.7 84.7L1726.6 103.6L1719.0 98.4L1711.5 103.800Z" fill="#ed1c24"/>
<path d="M590.4 847.4L470.5 598.100" stroke="#ed1c24" stroke-width="3.500" stroke-linecap="round" fill="none"/>
<path d="M464.7 586.1L479.8 599.9L470.6 598.4L466.1 606.500Z" fill="#ed1c24"/>
<path d="M1451.0 802.6L1381.2 615.500" stroke="#ed1c24" stroke-width="3.500" stroke-linecap="round" fill="none"/>
<path d="M1376.6 603.0L1390.4 618.1L1381.4 615.8L1376.1 623.500Z" fill="#ed1c24"/>
<text y="248" font-size="17" fill="#ed1c24" letter-spacing="2.600" font-family="'Liberation Serif','Noto Serif CJK SC',serif"><tspan x="1528">1</tspan><tspan x="1536">，点击这个即可查看提交历史</tspan></text>
<text x="1528" y="288.500" font-size="17" fill="#ed1c24" letter-spacing="2.600" font-family="'Liberation Serif','Noto Serif CJK SC',serif">在文件下点击就是文件的历史提交记录</text>
<text x="1528" y="328.500" font-size="17" fill="#ed1c24" letter-spacing="2.600" font-family="'Liberation Serif','Noto Serif CJK SC',serif">在项目下点击就是项目的历史提交记录</text>
<text x="702" y="893.500" font-size="17" fill="#ed1c24" letter-spacing="2.600" font-family="'Liberation Serif','Noto Serif CJK SC',serif">这里会显示提交的历史信息</text>
<text x="1575" y="762" font-size="17" fill="#ed1c24" letter-spacing="2.600" font-family="'Liberation Serif','Noto Serif CJK SC',serif">这边会显示所做的改动文件</text>
<text x="1575" y="803" font-size="17" fill="#ed1c24" letter-spacing="2.600" font-family="'Liberation Serif','Noto Serif CJK SC',serif">你可以一一点击查看改动</text>
</svg>
</body></html>
